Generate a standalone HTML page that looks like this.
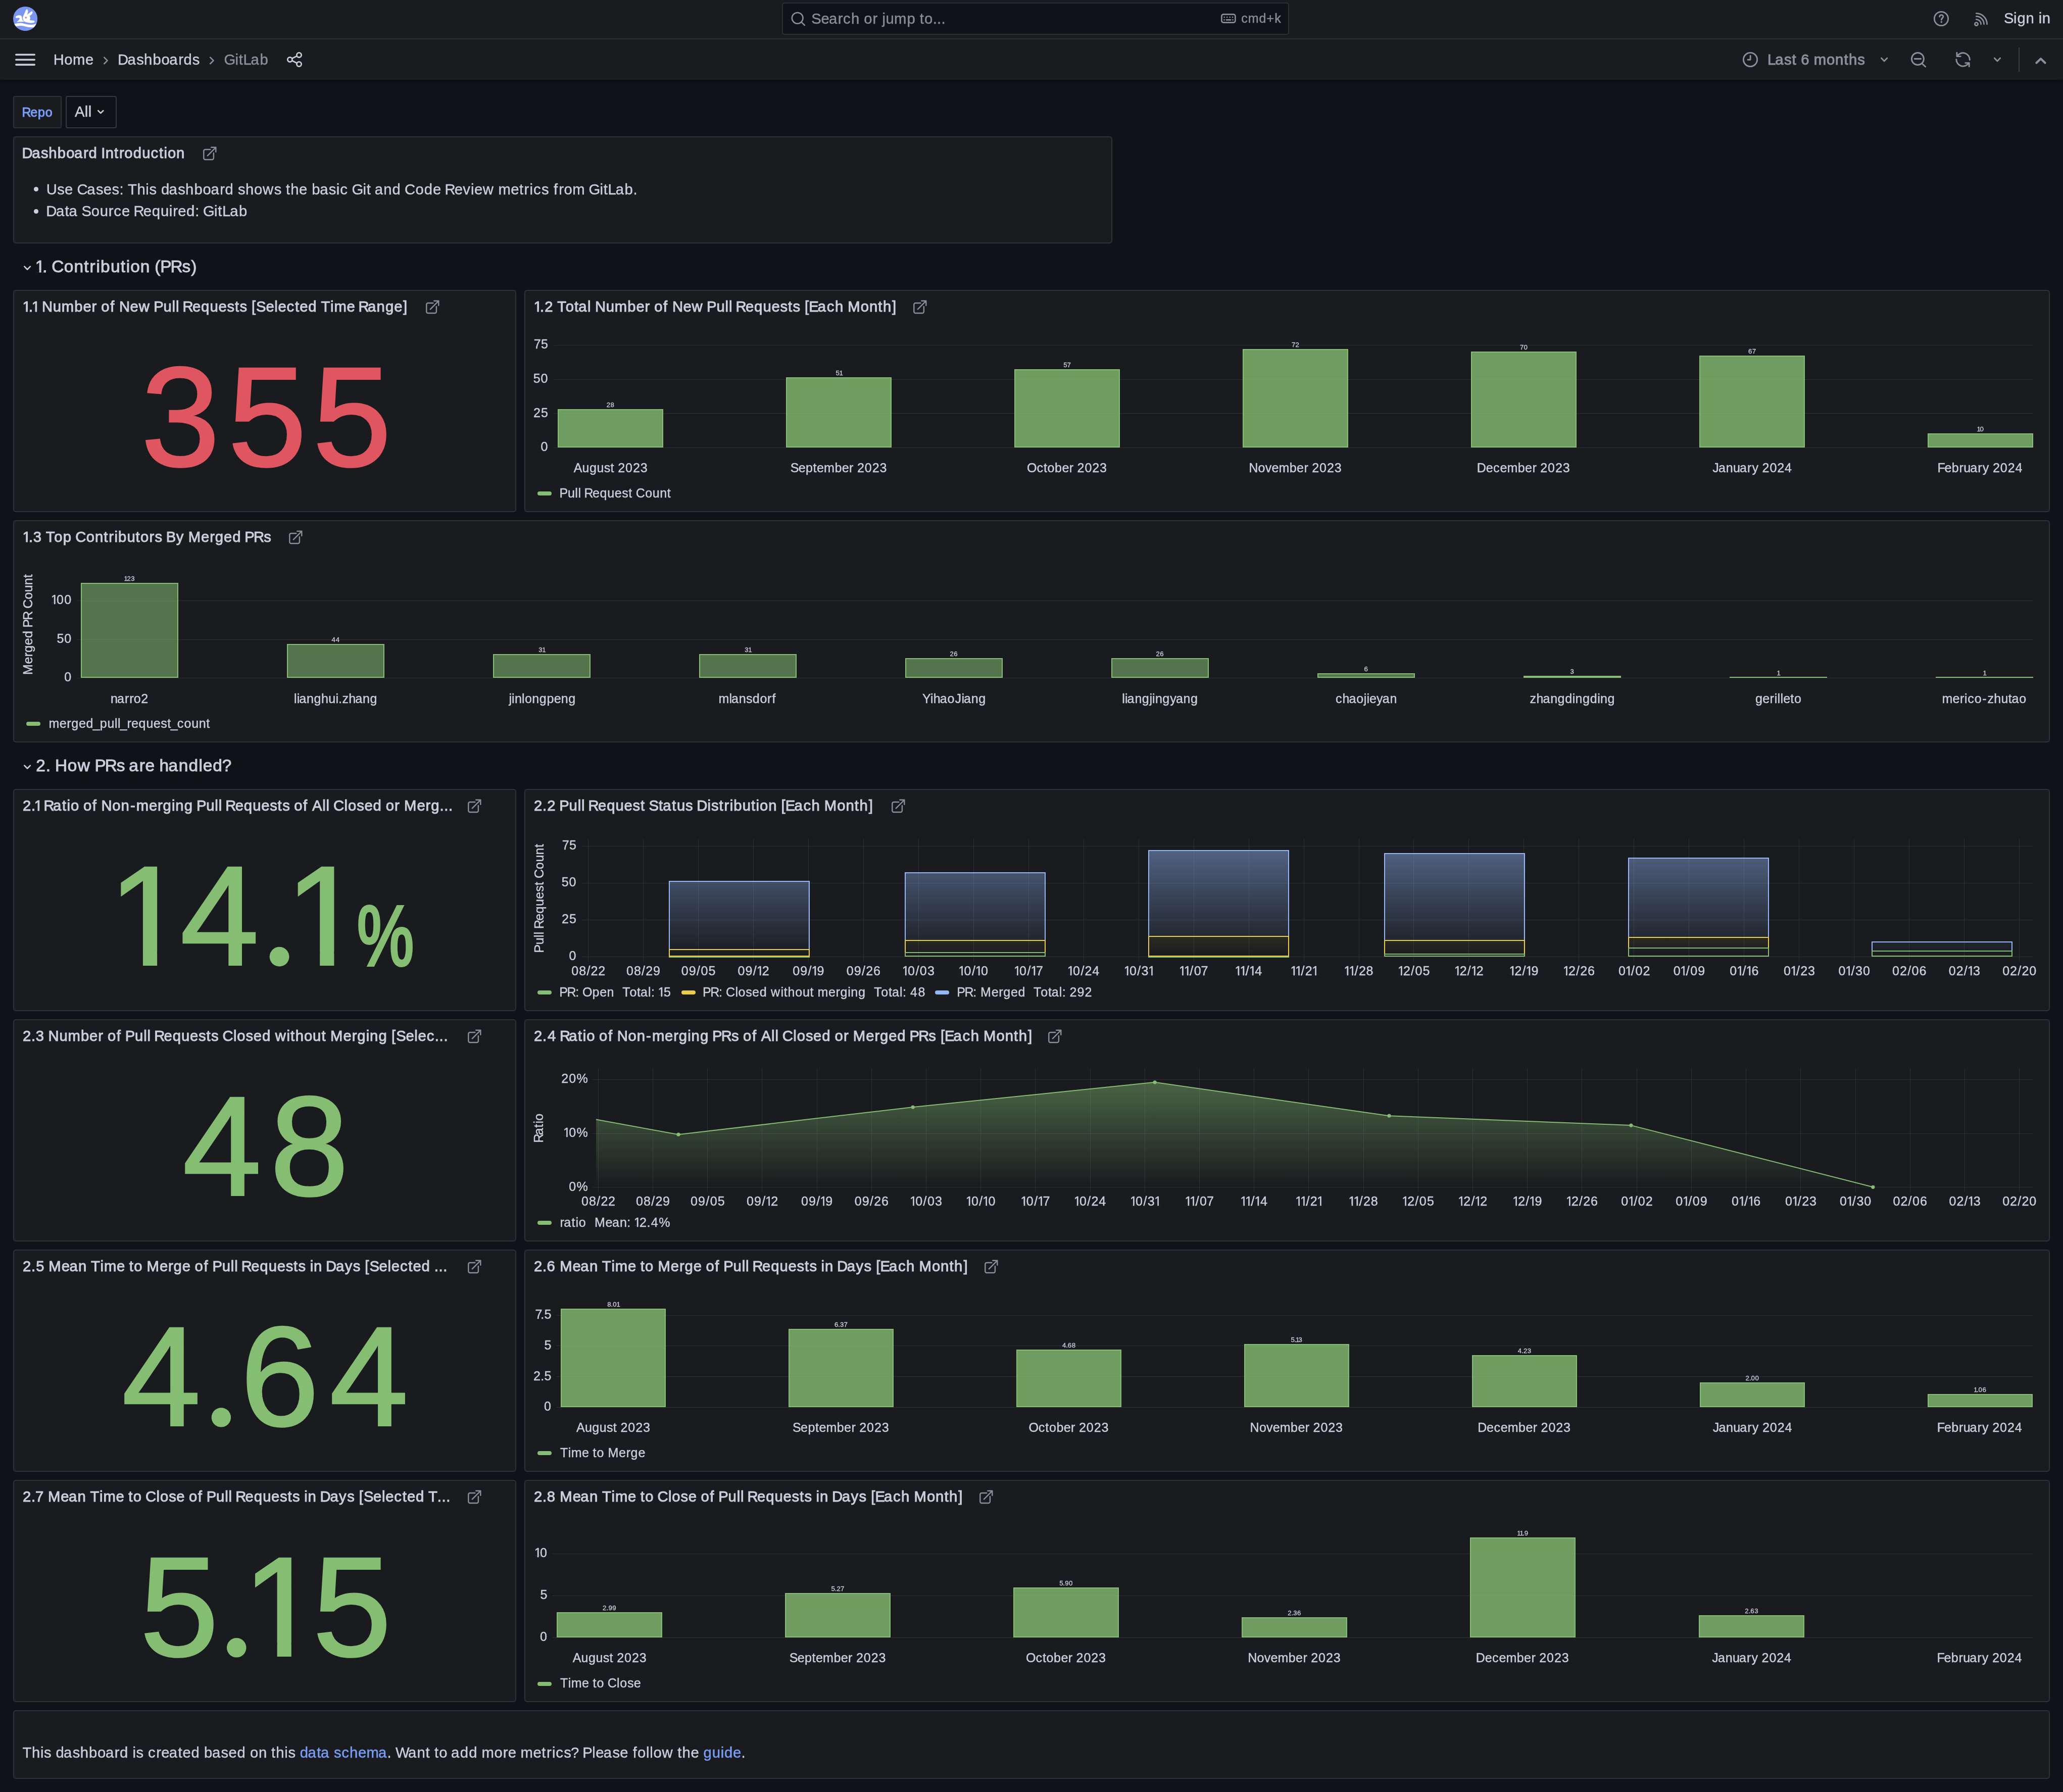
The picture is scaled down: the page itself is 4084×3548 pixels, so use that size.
<!DOCTYPE html>
<html lang="en"><head><meta charset="utf-8"><title>GitLab - Dashboards - Grafana</title>
<style>
html,body{margin:0;padding:0;}
body{width:4084px;height:3548px;background:#111217;overflow:hidden;position:relative;font-family:"Liberation Sans",Arial,sans-serif;}
#root{position:absolute;left:0;top:0;width:4084px;height:3548px;overflow:hidden;will-change:transform;}
#root div,#root span,#root svg{position:absolute;}
#root span{white-space:pre;}
#root svg text{font-family:"Liberation Sans",Arial,sans-serif;white-space:pre;}
#root a{color:#799ef8;text-decoration:none;}
</style></head>
<body><div id="root">
<div style="left:0px;top:0px;width:4084px;height:158px;background:#191b1f;box-shadow:0 0 10px 2px rgba(0,0,0,0.55);"></div>
<div style="left:0px;top:76px;width:4084px;height:2px;background:#2e3035;"></div>
<svg style="left:26px;top:13px;" width="48.2" height="48.2" viewBox="-0.1 -0.1 48.2 48.2"><defs><clipPath id="lc"><circle cx="24" cy="24" r="24.1"/></clipPath></defs><circle cx="24" cy="24" r="24.1" fill="#7b96f0"/><g clip-path="url(#lc)" fill="#fff"><path d="M19.3 24.5 C18.6 21 20 18.5 21.5 15.5 L25.2 6.6 C26 5 28 4.9 28.8 6.6 C30 9 29.5 12.5 27 16.3 L35.6 9.8 C37.2 8.6 38.8 10 38.4 11.8 C37.8 14.5 35.5 16.6 32.3 18.3 C34 20.5 34.6 23.5 32.8 27 C36 27.6 39.5 27.6 41.6 27.8 C43 29 42.8 31 41 31.6 C36 33 30 32.3 24 30.4 C21 29.2 19.8 27 19.3 24.5 Z"/><path d="M4.6 20.6 C5.5 18 9.5 16.6 13.5 17.2 C16.5 17.7 17.6 20 17.6 23.5 C17.8 26.5 19.5 28.5 22 30 C17 30 12 30 7 30.8 L12.8 24.6 C13.6 23 11.5 21.8 8.8 22.4 C6.5 23 5 22.4 4.6 20.6 Z"/><path d="M-1 35.5 C6 33 13 32 18 32.8 C24 33.8 30 36.2 36 36 C40 35.8 44 34.6 49 33 L49 39 C45 40.5 40 41.4 35 41.2 C28 41 22 38 15.5 37.8 C11 37.7 6 38.8 -1 41 Z"/></g><circle cx="25.1" cy="21.7" r="1.9" fill="#ee7f86"/></svg>
<div style="left:1548px;top:5px;width:1004px;height:63.5px;background:#111217;border:2px solid #2d2e34;border-radius:5px;box-sizing:border-box;"></div>
<svg style="left:1560px;top:18px;" width="40" height="40" viewBox="0 0 40 40"><g fill="none" stroke="#8d8e99" stroke-width="2.5" stroke-linecap="round"><circle cx="18.7" cy="17.8" r="10.9"/><path d="M26.6 25.9 L32.9 32"/></g></svg>
<svg style="left:2417.1px;top:27.4px;" width="29.8" height="19" viewBox="0 0 29.8 19"><g fill="none" stroke="#8d8e99" stroke-width="2.6"><rect x="1.4" y="1.4" width="27" height="16.2" rx="3.6"/></g><g fill="#8d8e99"><circle cx="6.7" cy="7.1" r="1.35"/><circle cx="12.2" cy="7.1" r="1.35"/><circle cx="17.7" cy="7.1" r="1.35"/><circle cx="23.2" cy="7.1" r="1.35"/><circle cx="6.4" cy="12.3" r="1.35"/><circle cx="23.6" cy="12.3" r="1.35"/><rect x="9.6" y="10.95" width="10.8" height="2.7" rx="1.35"/></g></svg>
<svg style="left:3823px;top:17px;" width="40" height="40" viewBox="0 0 40 40"><g fill="none" stroke="#8d8e99" stroke-width="2.8" stroke-linecap="round"><circle cx="20" cy="20" r="13.7"/><path d="M16.6 16.2 C16.8 13.4 18.6 12.6 20.3 12.6 C22.4 12.6 23.9 14 23.9 15.8 C23.9 18.6 20.3 18.8 20.3 22.4"/></g><circle cx="20.3" cy="26.6" r="1.8" fill="#8d8e99"/></svg>
<svg style="left:3903px;top:20px;" width="40" height="40" viewBox="0 0 40 40"><g fill="none" stroke="#8d8e99" stroke-width="2.7" stroke-linecap="round"><circle cx="9.5" cy="27.6" r="3.1"/><path d="M9.3 18.3 A9.6 9.6 0 0 1 18.6 27.8"/><path d="M9.3 12.4 A15.4 15.4 0 0 1 24.6 27.8"/><path d="M9.3 6.4 A21.4 21.4 0 0 1 30.6 27.8"/></g></svg>
<svg style="left:28px;top:104px;" width="44" height="28" viewBox="0 0 44 28"><g stroke="#ccccdb" stroke-width="3.6" stroke-linecap="round"><path d="M3.8 4.3H40.2M3.8 14.2H40.2M3.8 24.1H40.2"/></g></svg>
<svg style="left:200px;top:108px;" width="20" height="24" viewBox="0 0 20 24"><path d="M6.2 5.6 L12.6 11.9 L6.2 18.2" fill="none" stroke="#8d8e99" stroke-width="2.6" stroke-linecap="round" stroke-linejoin="round"/></svg>
<svg style="left:410px;top:108px;" width="20" height="24" viewBox="0 0 20 24"><path d="M6.2 5.6 L12.6 11.9 L6.2 18.2" fill="none" stroke="#8d8e99" stroke-width="2.6" stroke-linecap="round" stroke-linejoin="round"/></svg>
<svg style="left:564px;top:100px;" width="40" height="36" viewBox="0 0 40 36"><g fill="none" stroke="#ccccdb" stroke-width="2.8"><circle cx="28" cy="8.9" r="4.6"/><circle cx="9.9" cy="17.9" r="4.6"/><circle cx="28" cy="27" r="4.6"/><path d="M14 15.8 L23.9 10.9 M14 20 L23.9 25"/></g></svg>
<svg style="left:3445px;top:98px;" width="40" height="40" viewBox="0 0 40 40"><g fill="none" stroke="#8d8e99" stroke-width="2.9" stroke-linecap="round" stroke-linejoin="round"><circle cx="20" cy="20" r="13.6"/><path d="M20.1 12.4 V20.2 H15"/></g></svg>
<svg style="left:3720px;top:108px;" width="20" height="20" viewBox="0 0 20 20"><path d="M4.4 7.1 l5.7 5.8 l5.7 -5.8" fill="none" stroke="#8d8e99" stroke-width="2.8" stroke-linecap="round" stroke-linejoin="round"/></svg>
<svg style="left:3778px;top:98px;" width="40" height="40" viewBox="0 0 40 40"><g fill="none" stroke="#8d8e99" stroke-width="2.9" stroke-linecap="round"><circle cx="18.4" cy="18.5" r="12"/><path d="M12.2 18.5 H24.6 M27.4 28.2 L33.6 34"/></g></svg>
<svg style="left:3866px;top:98px;" width="40" height="40" viewBox="0 0 40 40"><g fill="none" stroke="#8d8e99" stroke-width="2.9" stroke-linecap="round" stroke-linejoin="round"><path d="M7.9 6.2 V13.6 H15.3"/><path d="M8.6 13.2 A13.3 13.3 0 0 1 33.3 20.6"/><path d="M32.2 33.8 V26.6 H24.8"/><path d="M31.4 26.8 A13.3 13.3 0 0 1 6.8 19.6"/></g></svg>
<svg style="left:3944px;top:108px;" width="20" height="20" viewBox="0 0 20 20"><path d="M4.3 7.1 l5.7 5.8 l5.7 -5.8" fill="none" stroke="#8d8e99" stroke-width="2.8" stroke-linecap="round" stroke-linejoin="round"/></svg>
<div style="left:3996px;top:94px;width:2px;height:48px;background:#3c3e44;"></div>
<svg style="left:4024px;top:106px;" width="32" height="28" viewBox="0 0 32 28"><path d="M7.4 18.6 L16 10.2 L24.6 18.6" fill="none" stroke="#8d8e99" stroke-width="4.2" stroke-linecap="round" stroke-linejoin="round"/></svg>
<div style="left:26px;top:190px;width:96px;height:64px;background:#191b1f;border:2px solid #2e3035;border-radius:4px;box-sizing:border-box;"></div>
<div style="left:130px;top:190px;width:101px;height:64px;background:#111217;border:2px solid #37373e;border-radius:4px;box-sizing:border-box;"></div>
<svg style="left:189px;top:212px;" width="20" height="20" viewBox="0 0 20 20"><path d="M5.2 7 l5.1 5 l5.1 -5" fill="none" stroke="#ccccdb" stroke-width="2.5" stroke-linecap="round" stroke-linejoin="round"/></svg>
<div style="left:26px;top:270px;width:2176px;height:212px;background:#191b1f;border:2px solid #2e3035;border-radius:5px;box-sizing:border-box;"></div>
<svg style="left:399.7px;top:288px;" width="32" height="32" viewBox="0 0 32 32"><g fill="none" stroke="#8d8e99" stroke-width="2.4" stroke-linecap="round" stroke-linejoin="round"><path d="M16.3 8 H6.3 A3 3 0 0 0 3.3 11 V25 A3 3 0 0 0 6.3 28 H19.9 A3 3 0 0 0 22.9 25 V14.9"/><path d="M10.8 20.3 L27 4.1"/><path d="M18.3 3.8 H27.3 V12.8"/></g></svg>
<div style="left:67.3px;top:370.4px;width:8.6px;height:8.6px;background:#ccccdb;border-radius:4.3px;"></div>
<div style="left:67.3px;top:414px;width:8.6px;height:8.6px;background:#ccccdb;border-radius:4.3px;"></div>
<svg style="left:42px;top:520.9px;" width="24" height="20" viewBox="0 0 24 20"><path d="M6.3 6.6 l5.8 5.9 l5.8 -5.9" fill="none" stroke="#ccccdb" stroke-width="2.7" stroke-linecap="round" stroke-linejoin="round"/></svg>
<div style="left:26px;top:574px;width:996px;height:440px;background:#191b1f;border:2px solid #2e3035;border-radius:5px;box-sizing:border-box;"></div>
<svg style="left:840.6px;top:592px;" width="32" height="32" viewBox="0 0 32 32"><g fill="none" stroke="#8d8e99" stroke-width="2.4" stroke-linecap="round" stroke-linejoin="round"><path d="M16.3 8 H6.3 A3 3 0 0 0 3.3 11 V25 A3 3 0 0 0 6.3 28 H19.9 A3 3 0 0 0 22.9 25 V14.9"/><path d="M10.8 20.3 L27 4.1"/><path d="M18.3 3.8 H27.3 V12.8"/></g></svg>
<svg style="left:26px;top:574px;" width="996" height="440" viewBox="0 0 996 440"><text y="348.3" font-size="280.4" fill="#e05660" stroke="#e05660" stroke-width="3.4" x="253.19 425.05 592.95">355</text></svg>
<div style="left:1038px;top:574px;width:3020px;height:440px;background:#191b1f;border:2px solid #2e3035;border-radius:5px;box-sizing:border-box;"></div>
<svg style="left:1806.1px;top:592px;" width="32" height="32" viewBox="0 0 32 32"><g fill="none" stroke="#8d8e99" stroke-width="2.4" stroke-linecap="round" stroke-linejoin="round"><path d="M16.3 8 H6.3 A3 3 0 0 0 3.3 11 V25 A3 3 0 0 0 6.3 28 H19.9 A3 3 0 0 0 22.9 25 V14.9"/><path d="M10.8 20.3 L27 4.1"/><path d="M18.3 3.8 H27.3 V12.8"/></g></svg>
<div style="left:1097px;top:886px;width:2928px;height:1px;background:#2c2f33;"></div>
<div style="left:1097px;top:818px;width:2928px;height:1px;background:#2c2f33;"></div>
<div style="left:1097px;top:751px;width:2928px;height:1px;background:#2c2f33;"></div>
<div style="left:1097px;top:683px;width:2928px;height:1px;background:#2c2f33;"></div>
<div style="left:1104px;top:810px;width:209px;height:76px;background:rgba(133,189,114,0.8);border:2px solid #85bd72;box-sizing:border-box;"></div>
<div style="left:1556px;top:747px;width:209px;height:139px;background:rgba(133,189,114,0.8);border:2px solid #85bd72;box-sizing:border-box;"></div>
<div style="left:2008px;top:731px;width:209px;height:155px;background:rgba(133,189,114,0.8);border:2px solid #85bd72;box-sizing:border-box;"></div>
<div style="left:2460px;top:691px;width:209px;height:195px;background:rgba(133,189,114,0.8);border:2px solid #85bd72;box-sizing:border-box;"></div>
<div style="left:2912px;top:696px;width:209px;height:190px;background:rgba(133,189,114,0.8);border:2px solid #85bd72;box-sizing:border-box;"></div>
<div style="left:3364px;top:704px;width:209px;height:182px;background:rgba(133,189,114,0.8);border:2px solid #85bd72;box-sizing:border-box;"></div>
<div style="left:3816px;top:858px;width:209px;height:28px;background:rgba(133,189,114,0.8);border:2px solid #85bd72;box-sizing:border-box;"></div>
<div style="left:1064px;top:973.3px;width:28px;height:8px;background:#85bd72;border-radius:4px;"></div>
<div style="left:26px;top:1030px;width:4032px;height:440px;background:#191b1f;border:2px solid #2e3035;border-radius:5px;box-sizing:border-box;"></div>
<svg style="left:569.5px;top:1048px;" width="32" height="32" viewBox="0 0 32 32"><g fill="none" stroke="#8d8e99" stroke-width="2.4" stroke-linecap="round" stroke-linejoin="round"><path d="M16.3 8 H6.3 A3 3 0 0 0 3.3 11 V25 A3 3 0 0 0 6.3 28 H19.9 A3 3 0 0 0 22.9 25 V14.9"/><path d="M10.8 20.3 L27 4.1"/><path d="M18.3 3.8 H27.3 V12.8"/></g></svg>
<div style="left:152.7px;top:1342px;width:3872.3px;height:1px;background:#2c2f33;"></div>
<div style="left:152.7px;top:1266px;width:3872.3px;height:1px;background:#2c2f33;"></div>
<div style="left:152.7px;top:1189px;width:3872.3px;height:1px;background:#2c2f33;"></div>
<div style="left:160px;top:1154px;width:192.6px;height:188px;background:rgba(133,189,114,0.55);border:2px solid #85bd72;box-sizing:border-box;"></div>
<div style="left:568px;top:1275px;width:192.6px;height:67px;background:rgba(133,189,114,0.55);border:2px solid #85bd72;box-sizing:border-box;"></div>
<div style="left:976px;top:1295px;width:192.6px;height:47px;background:rgba(133,189,114,0.55);border:2px solid #85bd72;box-sizing:border-box;"></div>
<div style="left:1384px;top:1295px;width:192.6px;height:47px;background:rgba(133,189,114,0.55);border:2px solid #85bd72;box-sizing:border-box;"></div>
<div style="left:1792px;top:1303px;width:192.6px;height:39px;background:rgba(133,189,114,0.55);border:2px solid #85bd72;box-sizing:border-box;"></div>
<div style="left:2200px;top:1303px;width:192.6px;height:39px;background:rgba(133,189,114,0.55);border:2px solid #85bd72;box-sizing:border-box;"></div>
<div style="left:2608px;top:1333px;width:192.6px;height:9px;background:rgba(133,189,114,0.55);border:2px solid #85bd72;box-sizing:border-box;"></div>
<div style="left:3016px;top:1338px;width:192.6px;height:4px;background:rgba(133,189,114,0.55);border:2px solid #85bd72;box-sizing:border-box;"></div>
<div style="left:3424px;top:1340px;width:192.6px;height:2px;background:#85bd72;"></div>
<div style="left:3832px;top:1340px;width:192.6px;height:2px;background:#85bd72;"></div>
<div style="left:52px;top:1429.3px;width:28px;height:8px;background:#85bd72;border-radius:4px;"></div>
<svg style="left:42px;top:1509px;" width="24" height="20" viewBox="0 0 24 20"><path d="M6.3 6.6 l5.8 5.9 l5.8 -5.9" fill="none" stroke="#ccccdb" stroke-width="2.7" stroke-linecap="round" stroke-linejoin="round"/></svg>
<div style="left:26px;top:1562px;width:996px;height:440px;background:#191b1f;border:2px solid #2e3035;border-radius:5px;box-sizing:border-box;"></div>
<svg style="left:924.2px;top:1580px;" width="32" height="32" viewBox="0 0 32 32"><g fill="none" stroke="#8d8e99" stroke-width="2.4" stroke-linecap="round" stroke-linejoin="round"><path d="M16.3 8 H6.3 A3 3 0 0 0 3.3 11 V25 A3 3 0 0 0 6.3 28 H19.9 A3 3 0 0 0 22.9 25 V14.9"/><path d="M10.8 20.3 L27 4.1"/><path d="M18.3 3.8 H27.3 V12.8"/></g></svg>
<svg style="left:26px;top:1562px;" width="996" height="440" viewBox="0 0 996 440"><text y="348.3" font-size="280.4" fill="#85bd72" stroke="#85bd72" stroke-width="3.4" x="188.11 330.71 488.15 538.41">14.1</text><text transform="translate(685.4 348.51) scale(0.75 1)" x="-6" y="0" font-size="168.2" fill="#85bd72" stroke="#85bd72" stroke-width="6">%</text><rect x="204.77" y="323.15" width="52.15" height="29.85" fill="#191b1f"/><rect x="285.1" y="323.15" width="49.96" height="29.85" fill="#191b1f"/><rect x="509.05" y="312.2" width="36.1" height="40.8" fill="#191b1f"/><circle cx="527.1" cy="332.2" r="19.4" fill="#85bd72"/><rect x="555.07" y="323.15" width="52.15" height="29.85" fill="#191b1f"/><rect x="635.4" y="323.15" width="49.96" height="29.85" fill="#191b1f"/></svg>
<div style="left:1038px;top:1562px;width:3020px;height:440px;background:#191b1f;border:2px solid #2e3035;border-radius:5px;box-sizing:border-box;"></div>
<svg style="left:1763.1px;top:1580px;" width="32" height="32" viewBox="0 0 32 32"><g fill="none" stroke="#8d8e99" stroke-width="2.4" stroke-linecap="round" stroke-linejoin="round"><path d="M16.3 8 H6.3 A3 3 0 0 0 3.3 11 V25 A3 3 0 0 0 6.3 28 H19.9 A3 3 0 0 0 22.9 25 V14.9"/><path d="M10.8 20.3 L27 4.1"/><path d="M18.3 3.8 H27.3 V12.8"/></g></svg>
<div style="left:1152px;top:1894px;width:2873px;height:1px;background:#2c2f33;"></div>
<div style="left:1152px;top:1821px;width:2873px;height:1px;background:#2c2f33;"></div>
<div style="left:1152px;top:1748px;width:2873px;height:1px;background:#2c2f33;"></div>
<div style="left:1152px;top:1675px;width:2873px;height:1px;background:#2c2f33;"></div>
<div style="left:1164px;top:1660.5px;width:1px;height:242px;background:#2c2f33;"></div>
<div style="left:1273px;top:1660.5px;width:1px;height:242px;background:#2c2f33;"></div>
<div style="left:1382px;top:1660.5px;width:1px;height:242px;background:#2c2f33;"></div>
<div style="left:1491px;top:1660.5px;width:1px;height:242px;background:#2c2f33;"></div>
<div style="left:1600px;top:1660.5px;width:1px;height:242px;background:#2c2f33;"></div>
<div style="left:1709px;top:1660.5px;width:1px;height:242px;background:#2c2f33;"></div>
<div style="left:1818px;top:1660.5px;width:1px;height:242px;background:#2c2f33;"></div>
<div style="left:1927px;top:1660.5px;width:1px;height:242px;background:#2c2f33;"></div>
<div style="left:2036px;top:1660.5px;width:1px;height:242px;background:#2c2f33;"></div>
<div style="left:2145px;top:1660.5px;width:1px;height:242px;background:#2c2f33;"></div>
<div style="left:2254px;top:1660.5px;width:1px;height:242px;background:#2c2f33;"></div>
<div style="left:2363px;top:1660.5px;width:1px;height:242px;background:#2c2f33;"></div>
<div style="left:2472px;top:1660.5px;width:1px;height:242px;background:#2c2f33;"></div>
<div style="left:2581px;top:1660.5px;width:1px;height:242px;background:#2c2f33;"></div>
<div style="left:2690px;top:1660.5px;width:1px;height:242px;background:#2c2f33;"></div>
<div style="left:2798px;top:1660.5px;width:1px;height:242px;background:#2c2f33;"></div>
<div style="left:2907px;top:1660.5px;width:1px;height:242px;background:#2c2f33;"></div>
<div style="left:3016px;top:1660.5px;width:1px;height:242px;background:#2c2f33;"></div>
<div style="left:3125px;top:1660.5px;width:1px;height:242px;background:#2c2f33;"></div>
<div style="left:3234px;top:1660.5px;width:1px;height:242px;background:#2c2f33;"></div>
<div style="left:3343px;top:1660.5px;width:1px;height:242px;background:#2c2f33;"></div>
<div style="left:3452px;top:1660.5px;width:1px;height:242px;background:#2c2f33;"></div>
<div style="left:3561px;top:1660.5px;width:1px;height:242px;background:#2c2f33;"></div>
<div style="left:3670px;top:1660.5px;width:1px;height:242px;background:#2c2f33;"></div>
<div style="left:3779px;top:1660.5px;width:1px;height:242px;background:#2c2f33;"></div>
<div style="left:3888px;top:1660.5px;width:1px;height:242px;background:#2c2f33;"></div>
<div style="left:3997px;top:1660.5px;width:1px;height:242px;background:#2c2f33;"></div>
<div style="left:1324px;top:1744px;width:279px;height:135px;background:linear-gradient(180deg, rgba(148,183,249,0.322), rgba(148,183,249,0.033));"></div>
<div style="left:1324px;top:1879px;width:279px;height:15px;background:linear-gradient(180deg, rgba(236,205,71,0.033), rgba(236,205,71,0.001));"></div>
<div style="left:1324px;top:1744px;width:279px;height:150px;border:2px solid #94b7f9;box-sizing:border-box;"></div>
<div style="left:1324px;top:1879px;width:279px;height:15px;border:2px solid #eccd47;box-sizing:border-box;"></div>
<div style="left:1324px;top:1894px;width:279px;height:2px;background:#85bd72;"></div>
<div style="left:1791px;top:1727px;width:279px;height:134px;background:linear-gradient(180deg, rgba(148,183,249,0.358), rgba(148,183,249,0.072));"></div>
<div style="left:1791px;top:1861px;width:279px;height:24px;background:linear-gradient(180deg, rgba(236,205,71,0.072), rgba(236,205,71,0.020));"></div>
<div style="left:1791px;top:1885px;width:279px;height:9px;background:linear-gradient(180deg, rgba(133,189,114,0.020), rgba(133,189,114,0.001));"></div>
<div style="left:1791px;top:1727px;width:279px;height:167px;border:2px solid #94b7f9;box-sizing:border-box;"></div>
<div style="left:1791px;top:1861px;width:279px;height:33px;border:2px solid #eccd47;box-sizing:border-box;"></div>
<div style="left:1791px;top:1885px;width:279px;height:9px;border:2px solid #85bd72;box-sizing:border-box;"></div>
<div style="left:2273px;top:1683px;width:279px;height:170px;background:linear-gradient(180deg, rgba(148,183,249,0.452), rgba(148,183,249,0.089));"></div>
<div style="left:2273px;top:1853px;width:279px;height:41px;background:linear-gradient(180deg, rgba(236,205,71,0.089), rgba(236,205,71,0.001));"></div>
<div style="left:2273px;top:1683px;width:279px;height:211px;border:2px solid #94b7f9;box-sizing:border-box;"></div>
<div style="left:2273px;top:1853px;width:279px;height:41px;border:2px solid #eccd47;box-sizing:border-box;"></div>
<div style="left:2273px;top:1894px;width:279px;height:2px;background:#85bd72;"></div>
<div style="left:2740px;top:1689px;width:279px;height:172px;background:linear-gradient(180deg, rgba(148,183,249,0.439), rgba(148,183,249,0.072));"></div>
<div style="left:2740px;top:1861px;width:279px;height:27px;background:linear-gradient(180deg, rgba(236,205,71,0.072), rgba(236,205,71,0.014));"></div>
<div style="left:2740px;top:1888px;width:279px;height:6px;background:linear-gradient(180deg, rgba(133,189,114,0.014), rgba(133,189,114,0.001));"></div>
<div style="left:2740px;top:1689px;width:279px;height:205px;border:2px solid #94b7f9;box-sizing:border-box;"></div>
<div style="left:2740px;top:1861px;width:279px;height:33px;border:2px solid #eccd47;box-sizing:border-box;"></div>
<div style="left:2740px;top:1888px;width:279px;height:6px;border:2px solid #85bd72;box-sizing:border-box;"></div>
<div style="left:3223px;top:1698px;width:279px;height:157px;background:linear-gradient(180deg, rgba(148,183,249,0.420), rgba(148,183,249,0.084));"></div>
<div style="left:3223px;top:1855px;width:279px;height:21px;background:linear-gradient(180deg, rgba(236,205,71,0.084), rgba(236,205,71,0.040));"></div>
<div style="left:3223px;top:1876px;width:279px;height:18px;background:linear-gradient(180deg, rgba(133,189,114,0.040), rgba(133,189,114,0.001));"></div>
<div style="left:3223px;top:1698px;width:279px;height:196px;border:2px solid #94b7f9;box-sizing:border-box;"></div>
<div style="left:3223px;top:1855px;width:279px;height:39px;border:2px solid #eccd47;box-sizing:border-box;"></div>
<div style="left:3223px;top:1876px;width:279px;height:18px;border:2px solid #85bd72;box-sizing:border-box;"></div>
<div style="left:3705px;top:1864px;width:279px;height:18px;background:linear-gradient(180deg, rgba(148,183,249,0.065), rgba(148,183,249,0.027));"></div>
<div style="left:3705px;top:1882px;width:279px;height:12px;background:linear-gradient(180deg, rgba(133,189,114,0.027), rgba(133,189,114,0.001));"></div>
<div style="left:3705px;top:1864px;width:279px;height:30px;border:2px solid #94b7f9;box-sizing:border-box;"></div>
<div style="left:3705px;top:1882px;width:279px;height:12px;border:2px solid #85bd72;box-sizing:border-box;"></div>
<div style="left:1063.7px;top:1961.3px;width:28px;height:8px;background:#85bd72;border-radius:4px;"></div>
<div style="left:1349.4px;top:1961.3px;width:28px;height:8px;background:#eccd47;border-radius:4px;"></div>
<div style="left:1851.4px;top:1961.3px;width:28px;height:8px;background:#94b7f9;border-radius:4px;"></div>
<div style="left:26px;top:2018px;width:996px;height:440px;background:#191b1f;border:2px solid #2e3035;border-radius:5px;box-sizing:border-box;"></div>
<svg style="left:924.2px;top:2036px;" width="32" height="32" viewBox="0 0 32 32"><g fill="none" stroke="#8d8e99" stroke-width="2.4" stroke-linecap="round" stroke-linejoin="round"><path d="M16.3 8 H6.3 A3 3 0 0 0 3.3 11 V25 A3 3 0 0 0 6.3 28 H19.9 A3 3 0 0 0 22.9 25 V14.9"/><path d="M10.8 20.3 L27 4.1"/><path d="M18.3 3.8 H27.3 V12.8"/></g></svg>
<svg style="left:26px;top:2018px;" width="996" height="440" viewBox="0 0 996 440"><text y="348.3" font-size="280.4" fill="#85bd72" stroke="#85bd72" stroke-width="3.4" x="335.56 508.42">48</text></svg>
<div style="left:1038px;top:2018px;width:3020px;height:440px;background:#191b1f;border:2px solid #2e3035;border-radius:5px;box-sizing:border-box;"></div>
<svg style="left:2073.2px;top:2036px;" width="32" height="32" viewBox="0 0 32 32"><g fill="none" stroke="#8d8e99" stroke-width="2.4" stroke-linecap="round" stroke-linejoin="round"><path d="M16.3 8 H6.3 A3 3 0 0 0 3.3 11 V25 A3 3 0 0 0 6.3 28 H19.9 A3 3 0 0 0 22.9 25 V14.9"/><path d="M10.8 20.3 L27 4.1"/><path d="M18.3 3.8 H27.3 V12.8"/></g></svg>
<div style="left:1172.6px;top:2350px;width:2852.4px;height:1px;background:#2c2f33;"></div>
<div style="left:1172.6px;top:2244px;width:2852.4px;height:1px;background:#2c2f33;"></div>
<div style="left:1172.6px;top:2137px;width:2852.4px;height:1px;background:#2c2f33;"></div>
<div style="left:1184px;top:2116.4px;width:1px;height:242.5px;background:#2c2f33;"></div>
<div style="left:1292px;top:2116.4px;width:1px;height:242.5px;background:#2c2f33;"></div>
<div style="left:1400px;top:2116.4px;width:1px;height:242.5px;background:#2c2f33;"></div>
<div style="left:1508px;top:2116.4px;width:1px;height:242.5px;background:#2c2f33;"></div>
<div style="left:1617px;top:2116.4px;width:1px;height:242.5px;background:#2c2f33;"></div>
<div style="left:1725px;top:2116.4px;width:1px;height:242.5px;background:#2c2f33;"></div>
<div style="left:1833px;top:2116.4px;width:1px;height:242.5px;background:#2c2f33;"></div>
<div style="left:1941px;top:2116.4px;width:1px;height:242.5px;background:#2c2f33;"></div>
<div style="left:2049px;top:2116.4px;width:1px;height:242.5px;background:#2c2f33;"></div>
<div style="left:2158px;top:2116.4px;width:1px;height:242.5px;background:#2c2f33;"></div>
<div style="left:2266px;top:2116.4px;width:1px;height:242.5px;background:#2c2f33;"></div>
<div style="left:2374px;top:2116.4px;width:1px;height:242.5px;background:#2c2f33;"></div>
<div style="left:2482px;top:2116.4px;width:1px;height:242.5px;background:#2c2f33;"></div>
<div style="left:2590px;top:2116.4px;width:1px;height:242.5px;background:#2c2f33;"></div>
<div style="left:2699px;top:2116.4px;width:1px;height:242.5px;background:#2c2f33;"></div>
<div style="left:2807px;top:2116.4px;width:1px;height:242.5px;background:#2c2f33;"></div>
<div style="left:2915px;top:2116.4px;width:1px;height:242.5px;background:#2c2f33;"></div>
<div style="left:3023px;top:2116.4px;width:1px;height:242.5px;background:#2c2f33;"></div>
<div style="left:3131px;top:2116.4px;width:1px;height:242.5px;background:#2c2f33;"></div>
<div style="left:3240px;top:2116.4px;width:1px;height:242.5px;background:#2c2f33;"></div>
<div style="left:3348px;top:2116.4px;width:1px;height:242.5px;background:#2c2f33;"></div>
<div style="left:3456px;top:2116.4px;width:1px;height:242.5px;background:#2c2f33;"></div>
<div style="left:3564px;top:2116.4px;width:1px;height:242.5px;background:#2c2f33;"></div>
<div style="left:3673px;top:2116.4px;width:1px;height:242.5px;background:#2c2f33;"></div>
<div style="left:3781px;top:2116.4px;width:1px;height:242.5px;background:#2c2f33;"></div>
<div style="left:3889px;top:2116.4px;width:1px;height:242.5px;background:#2c2f33;"></div>
<div style="left:3997px;top:2116.4px;width:1px;height:242.5px;background:#2c2f33;"></div>
<svg style="left:1170px;top:2100px;" width="2860" height="270" viewBox="0 0 2860 270"><defs><linearGradient id="g24" gradientUnits="userSpaceOnUse" x1="0" y1="16.4" x2="0" y2="250.9"><stop offset="0" stop-color="#85bd72" stop-opacity="0.5"/><stop offset="1" stop-color="#85bd72" stop-opacity="0"/></linearGradient></defs><path d="M10 116.5 L173 146.2 L637.2 92.1 L1116.1 42.8 L1580 109.2 L2058.9 128.1 L2537.8 250.3 L2537.8 250.9 L10 250.9 Z" fill="url(#g24)"/><path d="M10 116.5 L173 146.2 L637.2 92.1 L1116.1 42.8 L1580 109.2 L2058.9 128.1 L2537.8 250.3" fill="none" stroke="#85bd72" stroke-width="2" stroke-linejoin="round"/><circle cx="173" cy="146.2" r="3.6" fill="#85bd72"/><circle cx="637.2" cy="92.1" r="3.6" fill="#85bd72"/><circle cx="1116.1" cy="42.8" r="3.6" fill="#85bd72"/><circle cx="1580" cy="109.2" r="3.6" fill="#85bd72"/><circle cx="2058.9" cy="128.1" r="3.6" fill="#85bd72"/><circle cx="2537.8" cy="250.3" r="3.6" fill="#85bd72"/></svg>
<div style="left:1063.7px;top:2417.3px;width:28px;height:8px;background:#85bd72;border-radius:4px;"></div>
<div style="left:26px;top:2474px;width:996px;height:440px;background:#191b1f;border:2px solid #2e3035;border-radius:5px;box-sizing:border-box;"></div>
<svg style="left:924.2px;top:2492px;" width="32" height="32" viewBox="0 0 32 32"><g fill="none" stroke="#8d8e99" stroke-width="2.4" stroke-linecap="round" stroke-linejoin="round"><path d="M16.3 8 H6.3 A3 3 0 0 0 3.3 11 V25 A3 3 0 0 0 6.3 28 H19.9 A3 3 0 0 0 22.9 25 V14.9"/><path d="M10.8 20.3 L27 4.1"/><path d="M18.3 3.8 H27.3 V12.8"/></g></svg>
<svg style="left:26px;top:2474px;" width="996" height="440" viewBox="0 0 996 440"><text y="348.3" font-size="280.4" fill="#85bd72" stroke="#85bd72" stroke-width="3.4" x="215.46 372.95 449.82 626.46">4.64</text><rect x="393.85" y="312.2" width="36.1" height="40.8" fill="#191b1f"/><circle cx="411.9" cy="332.4" r="19.2" fill="#85bd72"/></svg>
<div style="left:1038px;top:2474px;width:3020px;height:440px;background:#191b1f;border:2px solid #2e3035;border-radius:5px;box-sizing:border-box;"></div>
<svg style="left:1946.9px;top:2492px;" width="32" height="32" viewBox="0 0 32 32"><g fill="none" stroke="#8d8e99" stroke-width="2.4" stroke-linecap="round" stroke-linejoin="round"><path d="M16.3 8 H6.3 A3 3 0 0 0 3.3 11 V25 A3 3 0 0 0 6.3 28 H19.9 A3 3 0 0 0 22.9 25 V14.9"/><path d="M10.8 20.3 L27 4.1"/><path d="M18.3 3.8 H27.3 V12.8"/></g></svg>
<div style="left:1102px;top:2786px;width:2923px;height:1px;background:#2c2f33;"></div>
<div style="left:1102px;top:2725px;width:2923px;height:1px;background:#2c2f33;"></div>
<div style="left:1102px;top:2664px;width:2923px;height:1px;background:#2c2f33;"></div>
<div style="left:1102px;top:2604px;width:2923px;height:1px;background:#2c2f33;"></div>
<div style="left:1110px;top:2591px;width:207.7px;height:195px;background:rgba(133,189,114,0.8);border:2px solid #85bd72;box-sizing:border-box;"></div>
<div style="left:1561px;top:2631px;width:207.7px;height:155px;background:rgba(133,189,114,0.8);border:2px solid #85bd72;box-sizing:border-box;"></div>
<div style="left:2012px;top:2672px;width:207.7px;height:114px;background:rgba(133,189,114,0.8);border:2px solid #85bd72;box-sizing:border-box;"></div>
<div style="left:2463px;top:2661px;width:207.7px;height:125px;background:rgba(133,189,114,0.8);border:2px solid #85bd72;box-sizing:border-box;"></div>
<div style="left:2914px;top:2683px;width:207.7px;height:103px;background:rgba(133,189,114,0.8);border:2px solid #85bd72;box-sizing:border-box;"></div>
<div style="left:3365px;top:2737px;width:207.7px;height:49px;background:rgba(133,189,114,0.8);border:2px solid #85bd72;box-sizing:border-box;"></div>
<div style="left:3816px;top:2760px;width:207.7px;height:26px;background:rgba(133,189,114,0.8);border:2px solid #85bd72;box-sizing:border-box;"></div>
<div style="left:1063.7px;top:2873px;width:28px;height:8px;background:#85bd72;border-radius:4px;"></div>
<div style="left:26px;top:2930px;width:996px;height:440px;background:#191b1f;border:2px solid #2e3035;border-radius:5px;box-sizing:border-box;"></div>
<svg style="left:924.2px;top:2948px;" width="32" height="32" viewBox="0 0 32 32"><g fill="none" stroke="#8d8e99" stroke-width="2.4" stroke-linecap="round" stroke-linejoin="round"><path d="M16.3 8 H6.3 A3 3 0 0 0 3.3 11 V25 A3 3 0 0 0 6.3 28 H19.9 A3 3 0 0 0 22.9 25 V14.9"/><path d="M10.8 20.3 L27 4.1"/><path d="M18.3 3.8 H27.3 V12.8"/></g></svg>
<svg style="left:26px;top:2930px;" width="996" height="440" viewBox="0 0 996 440"><text y="348.3" font-size="280.4" fill="#85bd72" stroke="#85bd72" stroke-width="3.4" x="250.85 403.3 453.81 592.95">5.15</text><rect x="424.2" y="312.2" width="36.1" height="40.8" fill="#191b1f"/><circle cx="442.25" cy="332.35" r="19.25" fill="#85bd72"/><rect x="470.47" y="323.15" width="52.15" height="29.85" fill="#191b1f"/><rect x="550.8" y="323.15" width="49.96" height="29.85" fill="#191b1f"/></svg>
<div style="left:1038px;top:2930px;width:3020px;height:440px;background:#191b1f;border:2px solid #2e3035;border-radius:5px;box-sizing:border-box;"></div>
<svg style="left:1937.1px;top:2948px;" width="32" height="32" viewBox="0 0 32 32"><g fill="none" stroke="#8d8e99" stroke-width="2.4" stroke-linecap="round" stroke-linejoin="round"><path d="M16.3 8 H6.3 A3 3 0 0 0 3.3 11 V25 A3 3 0 0 0 6.3 28 H19.9 A3 3 0 0 0 22.9 25 V14.9"/><path d="M10.8 20.3 L27 4.1"/><path d="M18.3 3.8 H27.3 V12.8"/></g></svg>
<div style="left:1094px;top:3242px;width:2931px;height:1px;background:#2c2f33;"></div>
<div style="left:1094px;top:3159px;width:2931px;height:1px;background:#2c2f33;"></div>
<div style="left:1094px;top:3076px;width:2931px;height:1px;background:#2c2f33;"></div>
<div style="left:1102px;top:3192px;width:209px;height:50px;background:rgba(133,189,114,0.8);border:2px solid #85bd72;box-sizing:border-box;"></div>
<div style="left:1554px;top:3154px;width:209px;height:88px;background:rgba(133,189,114,0.8);border:2px solid #85bd72;box-sizing:border-box;"></div>
<div style="left:2006px;top:3143px;width:209px;height:99px;background:rgba(133,189,114,0.8);border:2px solid #85bd72;box-sizing:border-box;"></div>
<div style="left:2458px;top:3202px;width:209px;height:40px;background:rgba(133,189,114,0.8);border:2px solid #85bd72;box-sizing:border-box;"></div>
<div style="left:2910px;top:3044px;width:209px;height:198px;background:rgba(133,189,114,0.8);border:2px solid #85bd72;box-sizing:border-box;"></div>
<div style="left:3363px;top:3198px;width:209px;height:44px;background:rgba(133,189,114,0.8);border:2px solid #85bd72;box-sizing:border-box;"></div>
<div style="left:1063.7px;top:3329.6px;width:28px;height:8px;background:#85bd72;border-radius:4px;"></div>
<div style="left:26px;top:3386px;width:4032px;height:136px;background:#191b1f;border:2px solid #2e3035;border-radius:5px;box-sizing:border-box;"></div>
<svg id="txt" style="left:0;top:0" width="4084" height="3548" viewBox="0 0 4084 3548">
<text x="1606.3 1625.5 1640.9 1658.7 1669.1 1685.1 1701.3 1710.3 1727.5 1737.3 1746.6 1753.4 1770.1 1795.4 1811.6 1820.7 1829.9 1846.7 1855.1 1863.5" y="47.2" font-size="29.26" fill="#8b8b96" stroke="#8b8b96" stroke-width="0.45">Search or jump to...</text>
<text x="2457.2 2470.8 2492.4 2507.6 2523.3" y="45" font-size="25.08" fill="#8b8b96" stroke="#8b8b96" stroke-width="0.45">cmd+k</text>
<text x="3966.9 3986.1 3993.5 4010.6 4026.9 4035.7 4042.8" y="46.4" font-size="29.26" fill="#ccccdb" stroke="#ccccdb" stroke-width="0.45">Sign in</text>
<text x="105.7 127.2 144.1 168.9" y="128" font-size="29.26" fill="#ccccdb" stroke="#ccccdb" stroke-width="0.45">Home</text>
<text x="232.9 252.6 270.2 285.1 302.4 319.6 335.3 353.2 363.5 380.8" y="128" font-size="29.26" fill="#ccccdb" stroke="#ccccdb" stroke-width="0.45">Dashboards</text>
<text x="443.5 465.5 472.7 481.5 496.6 514.5" y="128" font-size="29.26" fill="#8d8e99" stroke="#8d8e99" stroke-width="0.45">GitLab</text>
<text x="3499 3514.3 3532.1 3547.6 3555.7 3565.3 3581.6 3590.7 3615.9 3633.1 3650.4 3660 3677.3" y="128.3" font-size="29.26" fill="#8d8e99" stroke="#8d8e99" stroke-width="1">Last 6 months</text>
<text x="43.5 60.2 74.9 89.8" y="230.8" font-size="25.08" fill="#799ef8" stroke="#799ef8" stroke-width="1">Repo</text>
<text x="147.9 167.7 174.8" y="231" font-size="29.26" fill="#ccccdb" stroke="#ccccdb" stroke-width="0.45">All</text>
<text x="43.4 63.3 81.1 96.3 113.8 131.2 147.1 165.1 175.6 191.9 200.3 208.7 226 236 246.3 263.7 281.2 298.5 314.9 324.6 331.9 349.1" y="313.3" font-size="29.26" fill="#ccccdb" stroke="#ccccdb" stroke-width="1">Dashboard Introduction</text>
<text x="91.7 113.2 128.1 144.4 152.4 172.2 189.9 204.8 221.6 236.4 244.5 253.1 271.4 288.3 295.5 310.1 318.9 334.6 352.2 367.1 384.4 401.6 417.4 435.2 445.5 461.8 471 485.9 502.9 520.1 542.7 557.3 566 575.3 592.1 608.4 617.3 633.2 650.8 665.8 673.2 687.8 696.6 718.6 725.7 733.9 741.7 759.2 776.4 792.6 801.1 822.6 839.8 857 873.2 880.4 899.7 916.2 931.9 938.9 955.8 976.9 986.4 1011.2 1028 1037.6 1048.6 1056 1072.1 1086.7 1095.9 1106.2 1116.4 1133.3 1157.7 1165.6 1187.6 1194.8 1203.6 1218.7 1236.6 1253.5" y="384.8" font-size="29.26" fill="#ccccdb" stroke="#ccccdb" stroke-width="0.45">Use Cases: This dashboard shows the basic Git and Code Review metrics from GitLab.</text>
<text x="91.3 111 128.6 136.6 152.9 161.4 180.7 197.7 214.8 225.2 241.1 257.4 264.6 283.8 300.7 318 334.8 342.2 352.2 369.1 386.2 394.3 402.1 424.1 431.3 440.1 455.2 473.1" y="428.4" font-size="29.26" fill="#ccccdb" stroke="#ccccdb" stroke-width="0.45">Data Source Required: GitLab</text>
<text x="69.8 84.2 93.5 102.2 126.8 146.4 166.2 177.5 190.4 199.1 218.9 238.7 249.8 258.2 277.8 296.4 306.3 317.2 337.5 360.5 378.2" y="538.5" font-size="33.44" fill="#ccccdb" stroke="#ccccdb" stroke-width="1">1. Contribution (PRs)</text>
<text x="44.4 57.1 62.7 79 83 104.7 121.8 147.3 164.5 181.6 191.4 200.3 218.2 226.3 235.9 257.5 274.7 295.8 304.2 323.5 340.6 347.9 354.4 361.5 381 398.1 415.5 432.5 449.5 464.9 474.4 489.1 498 507.1 526.4 543.2 550.5 567.6 584 593.2 610.3 626.6 635.4 654.1 661.4 686.4 702.7 709.5 727.9 745.6 763 780.2 797.9" y="617.3" font-size="29.26" fill="#ccccdb" stroke="#ccccdb" stroke-width="1">1.1 Number of New Pull Requests [Selected Time Range]</text>
<text x="1056.4 1069.1 1078.3 1094.5 1103.2 1119.7 1137.1 1145.3 1163.1 1169.6 1177.9 1199.7 1216.8 1242.3 1259.5 1276.6 1286.3 1295.3 1313.1 1321.3 1330.9 1352.5 1369.6 1390.8 1399.1 1418.5 1435.6 1442.9 1449.4 1456.5 1476 1493.1 1510.5 1527.5 1544.5 1559.9 1569.4 1584.1 1593 1601.2 1618.7 1636.7 1652.9 1669.2 1678.2 1703.7 1720.9 1738.2 1747.9 1766.1" y="617.3" font-size="29.26" fill="#ccccdb" stroke="#ccccdb" stroke-width="1">1.2 Total Number of New Pull Requests [Each Month]</text>
<text x="1070.4" y="893.2" font-size="25.08" fill="#ccccdb" stroke="#ccccdb" stroke-width="0.45">0</text>
<text x="1056.1 1070.9" y="825.6" font-size="25.08" fill="#ccccdb" stroke="#ccccdb" stroke-width="0.45">25</text>
<text x="1055.8 1070.4" y="757.9" font-size="25.08" fill="#ccccdb" stroke="#ccccdb" stroke-width="0.45">50</text>
<text x="1056.8 1070.9" y="690.2" font-size="25.08" fill="#ccccdb" stroke="#ccccdb" stroke-width="0.45">75</text>
<text x="1200.8 1208.6" y="805.6" font-size="13.27" fill="#ccccdb" stroke="#ccccdb" stroke-width="0.3">28</text>
<text x="1135.7 1152.5 1166.9 1181.4 1195.7 1208.4 1215.3 1223.2 1238 1252.9 1267.7" y="935.2" font-size="25.08" fill="#ccccdb" stroke="#ccccdb" stroke-width="0.45">August 2023</text>
<text x="1654.4 1661.4" y="742.6" font-size="13.27" fill="#ccccdb" stroke="#ccccdb" stroke-width="0.3">51</text>
<text x="1564.7 1580.8 1595.1 1609.6 1617.1 1631.1 1652.4 1666.8 1681.1 1689.5 1696.9 1711.7 1726.7 1741.5" y="935.2" font-size="25.08" fill="#ccccdb" stroke="#ccccdb" stroke-width="0.45">September 2023</text>
<text x="2105.2 2112.5" y="726.6" font-size="13.27" fill="#ccccdb" stroke="#ccccdb" stroke-width="0.3">57</text>
<text x="2033 2052.4 2065.9 2073.5 2088.1 2102.4 2116.7 2125.1 2132.5 2147.4 2162.3 2177.1" y="935.2" font-size="25.08" fill="#ccccdb" stroke="#ccccdb" stroke-width="0.45">October 2023</text>
<text x="2557.1 2564.6" y="686.6" font-size="13.27" fill="#ccccdb" stroke="#ccccdb" stroke-width="0.3">72</text>
<text x="2472.3 2490.6 2504.8 2517.4 2531.4 2552.7 2567.1 2581.4 2589.7 2597.2 2612 2627 2641.7" y="935.2" font-size="25.08" fill="#ccccdb" stroke="#ccccdb" stroke-width="0.45">November 2023</text>
<text x="3009 3016.4" y="691.6" font-size="13.27" fill="#ccccdb" stroke="#ccccdb" stroke-width="0.3">70</text>
<text x="2923.8 2941.7 2956 2969.4 2983.4 3004.7 3019.1 3033.4 3041.7 3049.2 3064 3079 3093.7" y="935.2" font-size="25.08" fill="#ccccdb" stroke="#ccccdb" stroke-width="0.45">December 2023</text>
<text x="3461.1 3468.7" y="699.6" font-size="13.27" fill="#ccccdb" stroke="#ccccdb" stroke-width="0.3">67</text>
<text x="3390.3 3402 3416.8 3431 3443.9 3458.9 3468.4 3480.9 3488.6 3503.4 3518.3 3533.1" y="935.2" font-size="25.08" fill="#ccccdb" stroke="#ccccdb" stroke-width="0.45">January 2024</text>
<text x="3913.5 3919.5" y="853.6" font-size="13.27" fill="#ccccdb" stroke="#ccccdb" stroke-width="0.3">10</text>
<text x="3835.4 3849.5 3863.8 3878.5 3887.3 3900.2 3915.2 3924.7 3937.3 3944.9 3959.7 3974.7 3989.4" y="935.2" font-size="25.08" fill="#ccccdb" stroke="#ccccdb" stroke-width="0.45">February 2024</text>
<text x="1107.4 1123.9 1138.3 1144.4 1150 1156.4 1173 1187.5 1202.3 1216.7 1231.2 1244.2 1251.1 1258.7 1277.2 1291.8 1306.2 1320.8" y="984.6" font-size="25.08" fill="#ccccdb" stroke="#ccccdb" stroke-width="0.45">Pull Request Count</text>
<text x="44.4 57.1 65.8 82 90.8 107.3 124.8 141 149.2 170.8 187.9 205.2 215.2 226.4 234 251.4 268.6 278.1 295.5 306.5 321.1 328.7 348.7 363.3 372.7 398.1 415.2 425.8 443.1 460.2 476.5 484.3 502.1 522.2" y="1073.3" font-size="29.26" fill="#ccccdb" stroke="#ccccdb" stroke-width="1">1.3 Top Contributors By Merged PRs</text>
<text x="-45.5 -24.1 -9.8 -1.2 13.2 27.5 41.4 47.9 62.8 80.9 85.7 103.9 118.2 132.3 146.6" y="1244.5" font-size="25.08" fill="#ccccdb" stroke="#ccccdb" stroke-width="0.45" transform="rotate(-90 55 1235.5)">Merged PR Count</text>
<text x="127.2" y="1349.3" font-size="25.08" fill="#ccccdb" stroke="#ccccdb" stroke-width="0.45">0</text>
<text x="112.6 127.2" y="1272.8" font-size="25.08" fill="#ccccdb" stroke="#ccccdb" stroke-width="0.45">50</text>
<text x="100.8 112 127.2" y="1196.3" font-size="25.08" fill="#ccccdb" stroke="#ccccdb" stroke-width="0.45">100</text>
<text x="245.5 251.4 259.2" y="1149.6" font-size="13.27" fill="#ccccdb" stroke="#ccccdb" stroke-width="0.3">123</text>
<text x="219 231.9 246.9 256.3 264.8 279.3" y="1391.8" font-size="25.08" fill="#ccccdb" stroke="#ccccdb" stroke-width="0.45">narro2</text>
<text x="656.6 664.8" y="1270.6" font-size="13.27" fill="#ccccdb" stroke="#ccccdb" stroke-width="0.3">44</text>
<text x="581.9 587.8 592.3 607 621.5 635.9 650.2 664.4 670 677.4 690.3 703.2 718 732.4" y="1391.8" font-size="25.08" fill="#ccccdb" stroke="#ccccdb" stroke-width="0.45">lianghui.zhang</text>
<text x="1066.3 1073.3" y="1290.6" font-size="13.27" fill="#ccccdb" stroke="#ccccdb" stroke-width="0.3">31</text>
<text x="1007.5 1013.1 1018.9 1033.1 1039 1053.2 1067.7 1082.5 1096.8 1110.8 1125.3" y="1391.8" font-size="25.08" fill="#ccccdb" stroke="#ccccdb" stroke-width="0.45">jinlongpeng</text>
<text x="1474.3 1481.3" y="1290.6" font-size="13.27" fill="#ccccdb" stroke="#ccccdb" stroke-width="0.3">31</text>
<text x="1422.4 1443.4 1448 1462.7 1477 1489.8 1504.4 1518.9 1528.6" y="1391.8" font-size="25.08" fill="#ccccdb" stroke="#ccccdb" stroke-width="0.45">mlansdorf</text>
<text x="1880.6 1888.3" y="1298.6" font-size="13.27" fill="#ccccdb" stroke="#ccccdb" stroke-width="0.3">26</text>
<text x="1826 1842 1847.7 1860.7 1875.5 1890.6 1903.6 1908.1 1922.8 1937.2" y="1391.8" font-size="25.08" fill="#ccccdb" stroke="#ccccdb" stroke-width="0.45">YihaoJiang</text>
<text x="2288.6 2296.3" y="1298.6" font-size="13.27" fill="#ccccdb" stroke="#ccccdb" stroke-width="0.3">26</text>
<text x="2221.3 2227.1 2231.6 2246.4 2260.8 2275.6 2281.1 2286.9 2301.3 2316.2 2327.9 2342.6 2357.1" y="1391.8" font-size="25.08" fill="#ccccdb" stroke="#ccccdb" stroke-width="0.45">liangjingyang</text>
<text x="2700.6" y="1328.6" font-size="13.27" fill="#ccccdb" stroke="#ccccdb" stroke-width="0.3">6</text>
<text x="2644.1 2657.4 2670.4 2685.2 2699.8 2705.4 2711.1 2725 2736.8 2751.5" y="1391.8" font-size="25.08" fill="#ccccdb" stroke="#ccccdb" stroke-width="0.45">chaojieyan</text>
<text x="3108.6" y="1333.6" font-size="13.27" fill="#ccccdb" stroke="#ccccdb" stroke-width="0.3">3</text>
<text x="3028.6 3041.5 3054.4 3069.2 3083.6 3098.3 3112.8 3118.6 3133 3147.7 3162.2 3168 3182.4" y="1391.8" font-size="25.08" fill="#ccccdb" stroke="#ccccdb" stroke-width="0.45">zhangdingding</text>
<text x="3517.5" y="1336.6" font-size="13.27" fill="#ccccdb" stroke="#ccccdb" stroke-width="0.3">1</text>
<text x="3474.9 3489.3 3503.6 3512.8 3518.6 3524.4 3530.2 3544.3 3551.9" y="1391.8" font-size="25.08" fill="#ccccdb" stroke="#ccccdb" stroke-width="0.45">gerilleto</text>
<text x="3925.5" y="1336.6" font-size="13.27" fill="#ccccdb" stroke="#ccccdb" stroke-width="0.3">1</text>
<text x="3844.6 3865.6 3880 3889.1 3895.2 3908.7 3924.2 3934.4 3947.3 3961.5 3975.8 3982.4 3997.2" y="1391.8" font-size="25.08" fill="#ccccdb" stroke="#ccccdb" stroke-width="0.45">merico-zhutao</text>
<text x="96.4 117.7 132.3 141.2 156 170.5 183.8 197.7 212.4 226.9 233 237.5 251.4 260 274.6 289.4 303.8 318.2 331.2 337.7 350.8 364.6 379.2 393.7 408.3" y="1440.8" font-size="25.08" fill="#ccccdb" stroke="#ccccdb" stroke-width="0.45">merged_pull_request_count</text>
<text x="71.2 90.8 100.1 109.1 133.8 153.7 177.9 187.4 207.7 230.7 247.4 255.3 275.8 287.5 306.1 315.6 333.5 353.7 373.6 393.5 401.7 421.3 439.7" y="1526.6" font-size="33.44" fill="#ccccdb" stroke="#ccccdb" stroke-width="1">2. How PRs are handled?</text>
<text x="44.9 62.1 67.7 83.9 86.6 105 122.9 132.5 139.9 156.2 164.9 182.8 190.9 200.5 222.3 239.4 257.9 269.8 294.9 312 322.6 340 347.3 364.7 381 388.9 408.2 425.3 432.7 439.2 446.3 465.7 482.8 500.3 517.2 534.2 549.6 559.2 573.8 582.3 600.1 608.2 618 638.2 645.6 652.1 660 681.5 689 706.2 721.4 738.5 754.7 763.7 781.1 790.8 800 825.4 842.6 853.2 870.5 879.3 888" y="1605.3" font-size="29.26" fill="#ccccdb" stroke="#ccccdb" stroke-width="1">2.1 Ratio of Non-merging Pull Requests of All Closed or Merg...</text>
<text x="1056.9 1074.1 1083.2 1099.5 1107.3 1126.6 1143.7 1151 1157.6 1164.6 1184.1 1201.2 1218.6 1235.6 1252.6 1268 1276.2 1284.5 1304 1312.3 1330.2 1339.9 1357.1 1371.7 1379.2 1400.6 1408.1 1423.5 1433.4 1444.7 1452.3 1469.7 1486.9 1496.6 1504 1521.2 1537.4 1546.6 1554.8 1572.4 1590.4 1606.5 1622.8 1631.8 1657.3 1674.5 1691.8 1701.5 1719.8" y="1605.3" font-size="29.26" fill="#ccccdb" stroke="#ccccdb" stroke-width="1">2.2 Pull Request Status Distribution [Each Month]</text>
<text x="1126.4" y="1901.3" font-size="25.08" fill="#ccccdb" stroke="#ccccdb" stroke-width="0.45">0</text>
<text x="1112.1 1126.9" y="1828.2" font-size="25.08" fill="#ccccdb" stroke="#ccccdb" stroke-width="0.45">25</text>
<text x="1111.8 1126.4" y="1755.1" font-size="25.08" fill="#ccccdb" stroke="#ccccdb" stroke-width="0.45">50</text>
<text x="1112.8 1126.9" y="1682" font-size="25.08" fill="#ccccdb" stroke="#ccccdb" stroke-width="0.45">75</text>
<text x="957.5 973.6 987.8 993.6 999.2 1005 1021.2 1035.5 1050 1064.1 1078.2 1090.9 1097.9 1104.9 1123 1137.3 1151.5 1165.8" y="1786.3" font-size="25.08" fill="#ccccdb" stroke="#ccccdb" stroke-width="0.45" transform="rotate(-90 1066.6 1777.3)">Pull Request Count</text>
<text x="1131.2 1146.2 1161.4 1169.6 1184.3" y="1931" font-size="25.08" fill="#ccccdb" stroke="#ccccdb" stroke-width="0.45">08/22</text>
<text x="1239.9 1254.9 1270.1 1278.3 1293" y="1931" font-size="25.08" fill="#ccccdb" stroke="#ccccdb" stroke-width="0.45">08/29</text>
<text x="1348.7 1363.8 1379 1387.4 1402.5" y="1931" font-size="25.08" fill="#ccccdb" stroke="#ccccdb" stroke-width="0.45">09/05</text>
<text x="1460.5 1475.5 1490.8 1497.7 1508.8" y="1931" font-size="25.08" fill="#ccccdb" stroke="#ccccdb" stroke-width="0.45">09/12</text>
<text x="1569.2 1584.2 1599.5 1606.4 1617.5" y="1931" font-size="25.08" fill="#ccccdb" stroke="#ccccdb" stroke-width="0.45">09/19</text>
<text x="1675.8 1690.8 1706 1714.2 1728.9" y="1931" font-size="25.08" fill="#ccccdb" stroke="#ccccdb" stroke-width="0.45">09/26</text>
<text x="1785.8 1797 1812.4 1820.8 1835.9" y="1931" font-size="25.08" fill="#ccccdb" stroke="#ccccdb" stroke-width="0.45">10/03</text>
<text x="1897.3 1908.5 1923.9 1930.8 1942" y="1931" font-size="25.08" fill="#ccccdb" stroke="#ccccdb" stroke-width="0.45">10/10</text>
<text x="2006.9 2018.1 2033.5 2040.4 2050.9" y="1931" font-size="25.08" fill="#ccccdb" stroke="#ccccdb" stroke-width="0.45">10/17</text>
<text x="2112.8 2124 2139.4 2147.6 2162.3" y="1931" font-size="25.08" fill="#ccccdb" stroke="#ccccdb" stroke-width="0.45">10/24</text>
<text x="2224.7 2235.9 2251.3 2259.6 2273.1" y="1931" font-size="25.08" fill="#ccccdb" stroke="#ccccdb" stroke-width="0.45">10/31</text>
<text x="2334 2343.8 2355.3 2363.7 2377.6" y="1931" font-size="25.08" fill="#ccccdb" stroke="#ccccdb" stroke-width="0.45">11/07</text>
<text x="2444.6 2454.4 2465.8 2472.8 2484.3" y="1931" font-size="25.08" fill="#ccccdb" stroke="#ccccdb" stroke-width="0.45">11/14</text>
<text x="2554.4 2564.1 2575.6 2583.8 2597.2" y="1931" font-size="25.08" fill="#ccccdb" stroke="#ccccdb" stroke-width="0.45">11/21</text>
<text x="2660.5 2670.2 2681.7 2689.9 2704.6" y="1931" font-size="25.08" fill="#ccccdb" stroke="#ccccdb" stroke-width="0.45">11/28</text>
<text x="2766.9 2777.9 2793 2801.4 2816.5" y="1931" font-size="25.08" fill="#ccccdb" stroke="#ccccdb" stroke-width="0.45">12/05</text>
<text x="2878.7 2889.7 2904.8 2911.7 2922.7" y="1931" font-size="25.08" fill="#ccccdb" stroke="#ccccdb" stroke-width="0.45">12/12</text>
<text x="2987.4 2998.4 3013.5 3020.4 3031.5" y="1931" font-size="25.08" fill="#ccccdb" stroke="#ccccdb" stroke-width="0.45">12/19</text>
<text x="3093.9 3104.9 3120 3128.2 3142.9" y="1931" font-size="25.08" fill="#ccccdb" stroke="#ccccdb" stroke-width="0.45">12/26</text>
<text x="3204 3217.6 3229.1 3237.5 3252.4" y="1931" font-size="25.08" fill="#ccccdb" stroke="#ccccdb" stroke-width="0.45">01/02</text>
<text x="3312.7 3326.3 3337.8 3346.2 3361.2" y="1931" font-size="25.08" fill="#ccccdb" stroke="#ccccdb" stroke-width="0.45">01/09</text>
<text x="3424.3 3438 3449.5 3456.4 3467.4" y="1931" font-size="25.08" fill="#ccccdb" stroke="#ccccdb" stroke-width="0.45">01/16</text>
<text x="3530.9 3544.6 3556.1 3564.2 3579" y="1931" font-size="25.08" fill="#ccccdb" stroke="#ccccdb" stroke-width="0.45">01/23</text>
<text x="3639.6 3653.3 3664.8 3673.1 3688" y="1931" font-size="25.08" fill="#ccccdb" stroke="#ccccdb" stroke-width="0.45">01/30</text>
<text x="3746.1 3761.1 3776.2 3784.6 3799.5" y="1931" font-size="25.08" fill="#ccccdb" stroke="#ccccdb" stroke-width="0.45">02/06</text>
<text x="3857.8 3872.8 3887.8 3894.8 3905.9" y="1931" font-size="25.08" fill="#ccccdb" stroke="#ccccdb" stroke-width="0.45">02/13</text>
<text x="3964.2 3979.1 3994.2 4002.4 4017.3" y="1931" font-size="25.08" fill="#ccccdb" stroke="#ccccdb" stroke-width="0.45">02/20</text>
<text x="1107.2 1122.4 1139.2 1146.2 1153 1172.6 1187.3 1201.6" y="1973.4" font-size="25.08" fill="#ccccdb" stroke="#ccccdb" stroke-width="0.45">PR: Open</text>
<text x="1232.3 1246.4 1261.1 1268 1283 1289 1296 1302.4 1313.9" y="1973.4" font-size="25.08" fill="#ccccdb" stroke="#ccccdb" stroke-width="0.45">Total: 15</text>
<text x="1391.1 1406.3 1423.1 1430.1 1437 1455.4 1461.6 1476.3 1489.1 1503.7 1517.6 1526.1 1545.5 1551.7 1559.6 1574.3 1588.9 1603.5 1610.4 1618.5 1639.9 1654.4 1663.4 1678.2 1684.2 1699" y="1973.4" font-size="25.08" fill="#ccccdb" stroke="#ccccdb" stroke-width="0.45">PR: Closed without merging</text>
<text x="1730.2 1744.3 1759 1765.9 1780.9 1786.9 1793.9 1802 1817.4" y="1973.4" font-size="25.08" fill="#ccccdb" stroke="#ccccdb" stroke-width="0.45">Total: 48</text>
<text x="1894.3 1909.5 1926.3 1933.3 1941 1962.7 1977.3 1986.2 2000.9 2015.5" y="1973.4" font-size="25.08" fill="#ccccdb" stroke="#ccccdb" stroke-width="0.45">PR: Merged</text>
<text x="2046.1 2060.2 2074.9 2081.8 2096.8 2102.8 2109.8 2117.5 2132.5 2147.6" y="1973.4" font-size="25.08" fill="#ccccdb" stroke="#ccccdb" stroke-width="0.45">Total: 292</text>
<text x="44.9 62.1 70.7 87 95.6 117.4 134.5 159.9 177.1 194.3 204 213 230.8 238.9 247.8 267.1 284.2 291.6 298.1 305.2 324.6 341.7 359.1 376.1 393.1 408.6 418.1 432.7 440.4 461.9 469.3 486.6 501.7 518.9 535.1 544.8 567.5 575.1 584.7 601.9 619.1 636.4 644.5 654.1 679.5 696.7 707.3 724.7 732 749.4 765.7 775.1 784.2 803.4 820.3 827.5 844.7 860.8 869.6 878.4" y="2061.3" font-size="29.26" fill="#ccccdb" stroke="#ccccdb" stroke-width="1">2.3 Number of Pull Requests Closed without Merging [Selec...</text>
<text x="1056.9 1074.1 1083.9 1100.1 1107.9 1126.2 1144.1 1153.8 1161.2 1177.4 1186.1 1204 1212.1 1221.7 1243.5 1260.7 1279.1 1291 1316.1 1333.2 1343.8 1361.2 1368.6 1385.9 1402.2 1410.1 1427.8 1447.9 1462.6 1471 1488.9 1497 1506.8 1527 1534.4 1540.9 1548.8 1570.3 1577.7 1595 1610.1 1627.2 1643.5 1652.4 1669.9 1679.6 1688.8 1714.2 1731.4 1741.9 1759.2 1776.3 1792.6 1800.4 1818.2 1838.3 1852.9 1861.9 1870 1887.6 1905.6 1921.7 1938 1947 1972.6 1989.7 2007.1 2016.7 2035" y="2061.3" font-size="29.26" fill="#ccccdb" stroke="#ccccdb" stroke-width="1">2.4 Ratio of Non-merging PRs of All Closed or Merged PRs [Each Month]</text>
<text x="1126.2 1141.4" y="2357.7" font-size="25.08" fill="#ccccdb" stroke="#ccccdb" stroke-width="0.45">0%</text>
<text x="1115 1126.2 1141.4" y="2251" font-size="25.08" fill="#ccccdb" stroke="#ccccdb" stroke-width="0.45">10%</text>
<text x="1111.3 1126.2 1141.4" y="2144.2" font-size="25.08" fill="#ccccdb" stroke="#ccccdb" stroke-width="0.45">20%</text>
<text x="1035.8 1051.1 1065.9 1073.7 1079.6" y="2241.5" font-size="25.08" fill="#ccccdb" stroke="#ccccdb" stroke-width="0.45" transform="rotate(-90 1065.8 2232.5)">Ratio</text>
<text x="1151 1166 1181.2 1189.4 1204.1" y="2386.8" font-size="25.08" fill="#ccccdb" stroke="#ccccdb" stroke-width="0.45">08/22</text>
<text x="1258.9 1273.9 1289.2 1297.4 1312.1" y="2386.8" font-size="25.08" fill="#ccccdb" stroke="#ccccdb" stroke-width="0.45">08/29</text>
<text x="1367 1382 1397.3 1405.7 1420.8" y="2386.8" font-size="25.08" fill="#ccccdb" stroke="#ccccdb" stroke-width="0.45">09/05</text>
<text x="1478 1493.1 1508.3 1515.2 1526.3" y="2386.8" font-size="25.08" fill="#ccccdb" stroke="#ccccdb" stroke-width="0.45">09/12</text>
<text x="1586 1601 1616.2 1623.2 1634.3" y="2386.8" font-size="25.08" fill="#ccccdb" stroke="#ccccdb" stroke-width="0.45">09/19</text>
<text x="1691.7 1706.8 1722 1730.2 1744.9" y="2386.8" font-size="25.08" fill="#ccccdb" stroke="#ccccdb" stroke-width="0.45">09/26</text>
<text x="1801 1812.2 1827.6 1836 1851.1" y="2386.8" font-size="25.08" fill="#ccccdb" stroke="#ccccdb" stroke-width="0.45">10/03</text>
<text x="1911.7 1923 1938.3 1945.3 1956.5" y="2386.8" font-size="25.08" fill="#ccccdb" stroke="#ccccdb" stroke-width="0.45">10/10</text>
<text x="2020.6 2031.8 2047.2 2054.1 2064.6" y="2386.8" font-size="25.08" fill="#ccccdb" stroke="#ccccdb" stroke-width="0.45">10/17</text>
<text x="2125.7 2136.9 2152.3 2160.5 2175.2" y="2386.8" font-size="25.08" fill="#ccccdb" stroke="#ccccdb" stroke-width="0.45">10/24</text>
<text x="2236.9 2248.1 2263.5 2271.8 2285.2" y="2386.8" font-size="25.08" fill="#ccccdb" stroke="#ccccdb" stroke-width="0.45">10/31</text>
<text x="2345.4 2355.2 2366.7 2375.1 2389" y="2386.8" font-size="25.08" fill="#ccccdb" stroke="#ccccdb" stroke-width="0.45">11/07</text>
<text x="2455.3 2465 2476.5 2483.4 2494.9" y="2386.8" font-size="25.08" fill="#ccccdb" stroke="#ccccdb" stroke-width="0.45">11/14</text>
<text x="2564.3 2574 2585.5 2593.7 2607.1" y="2386.8" font-size="25.08" fill="#ccccdb" stroke="#ccccdb" stroke-width="0.45">11/21</text>
<text x="2669.6 2679.4 2690.8 2699 2713.7" y="2386.8" font-size="25.08" fill="#ccccdb" stroke="#ccccdb" stroke-width="0.45">11/28</text>
<text x="2775.2 2786.3 2801.3 2809.8 2824.9" y="2386.8" font-size="25.08" fill="#ccccdb" stroke="#ccccdb" stroke-width="0.45">12/05</text>
<text x="2886.3 2897.3 2912.4 2919.3 2930.3" y="2386.8" font-size="25.08" fill="#ccccdb" stroke="#ccccdb" stroke-width="0.45">12/12</text>
<text x="2994.2 3005.2 3020.3 3027.2 3038.4" y="2386.8" font-size="25.08" fill="#ccccdb" stroke="#ccccdb" stroke-width="0.45">12/19</text>
<text x="3100 3111 3126.1 3134.3 3148.9" y="2386.8" font-size="25.08" fill="#ccccdb" stroke="#ccccdb" stroke-width="0.45">12/26</text>
<text x="3209.3 3222.9 3234.4 3242.8 3257.7" y="2386.8" font-size="25.08" fill="#ccccdb" stroke="#ccccdb" stroke-width="0.45">01/02</text>
<text x="3317.2 3330.9 3342.4 3350.8 3365.8" y="2386.8" font-size="25.08" fill="#ccccdb" stroke="#ccccdb" stroke-width="0.45">01/09</text>
<text x="3428.1 3441.8 3453.3 3460.2 3471.2" y="2386.8" font-size="25.08" fill="#ccccdb" stroke="#ccccdb" stroke-width="0.45">01/16</text>
<text x="3533.9 3547.6 3559.1 3567.3 3582" y="2386.8" font-size="25.08" fill="#ccccdb" stroke="#ccccdb" stroke-width="0.45">01/23</text>
<text x="3641.9 3655.5 3667 3675.4 3690.2" y="2386.8" font-size="25.08" fill="#ccccdb" stroke="#ccccdb" stroke-width="0.45">01/30</text>
<text x="3747.6 3762.5 3777.6 3786 3801" y="2386.8" font-size="25.08" fill="#ccccdb" stroke="#ccccdb" stroke-width="0.45">02/06</text>
<text x="3858.5 3873.5 3888.6 3895.5 3906.7" y="2386.8" font-size="25.08" fill="#ccccdb" stroke="#ccccdb" stroke-width="0.45">02/13</text>
<text x="3964.2 3979.1 3994.2 4002.4 4017.2" y="2386.8" font-size="25.08" fill="#ccccdb" stroke="#ccccdb" stroke-width="0.45">02/20</text>
<text x="1108.5 1116.3 1131.5 1139.6 1145.7" y="2429.2" font-size="25.08" fill="#ccccdb" stroke="#ccccdb" stroke-width="0.45">ratio</text>
<text x="1177 1198.6 1211.9 1227 1241.3 1248.3 1254.8 1266.1 1280.6 1288.7 1304.3" y="2429.2" font-size="25.08" fill="#ccccdb" stroke="#ccccdb" stroke-width="0.45">Mean: 12.4%</text>
<text x="44.9 62.1 71.2 87.4 96.3 121.7 137.4 155.1 171.4 179.9 198.6 205.9 231 247.2 255.8 265.2 281.5 290.5 315.9 333 343.6 360.8 377.1 385.5 403.4 411.5 420.4 439.7 456.8 464.2 470.7 477.7 497.2 514.3 531.7 548.7 565.7 581.1 590.6 605.3 613.7 621 637.3 645.1 664.9 682.7 698.7 713.4 722.3 731.4 750.6 767.5 774.7 791.9 808.3 817.5 834.6 850.9 859.7 868.4 877.2" y="2517.3" font-size="29.26" fill="#ccccdb" stroke="#ccccdb" stroke-width="1">2.5 Mean Time to Merge of Pull Requests in Days [Selected ...</text>
<text x="1056.9 1074.1 1082.5 1098.8 1108.2 1133.6 1149.3 1167 1183.3 1191.8 1210.5 1217.8 1242.9 1259.1 1267.7 1277.1 1293.4 1302.4 1327.8 1344.9 1355.5 1372.7 1389 1397.4 1415.3 1423.4 1432.3 1451.6 1468.7 1476.1 1482.6 1489.6 1509.1 1526.2 1543.6 1560.6 1577.6 1593 1602.5 1617.2 1625.6 1632.9 1649.2 1657 1676.8 1694.6 1710.6 1725.3 1734.2 1742.4 1760 1778 1794.1 1810.4 1819.4 1844.9 1862.1 1879.4 1889.1 1907.4" y="2517.3" font-size="29.26" fill="#ccccdb" stroke="#ccccdb" stroke-width="1">2.6 Mean Time to Merge of Pull Requests in Days [Each Month]</text>
<text x="1076.9" y="2793.2" font-size="25.08" fill="#ccccdb" stroke="#ccccdb" stroke-width="0.45">0</text>
<text x="1056 1070.2 1077.4" y="2732.5" font-size="25.08" fill="#ccccdb" stroke="#ccccdb" stroke-width="0.45">2.5</text>
<text x="1077.4" y="2671.8" font-size="25.08" fill="#ccccdb" stroke="#ccccdb" stroke-width="0.45">5</text>
<text x="1059.5 1070.2 1077.4" y="2611.1" font-size="25.08" fill="#ccccdb" stroke="#ccccdb" stroke-width="0.45">7.5</text>
<text x="1202.2 1209.6 1213.2 1220.4" y="2586.6" font-size="13.27" fill="#ccccdb" stroke="#ccccdb" stroke-width="0.3">8.01</text>
<text x="1141.1 1157.9 1172.3 1186.8 1201 1213.7 1220.7 1228.5 1243.3 1258.3 1273" y="2835.2" font-size="25.08" fill="#ccccdb" stroke="#ccccdb" stroke-width="0.45">August 2023</text>
<text x="1652.1 1659.3 1662.9 1670.4" y="2626.6" font-size="13.27" fill="#ccccdb" stroke="#ccccdb" stroke-width="0.3">6.37</text>
<text x="1569 1585.1 1599.5 1614 1621.4 1635.4 1656.8 1671.1 1685.5 1693.8 1701.2 1716.1 1731 1745.8" y="2835.2" font-size="25.08" fill="#ccccdb" stroke="#ccccdb" stroke-width="0.45">September 2023</text>
<text x="2102.9 2110.2 2113.7 2121.7" y="2667.6" font-size="13.27" fill="#ccccdb" stroke="#ccccdb" stroke-width="0.3">4.68</text>
<text x="2036.4 2055.7 2069.2 2076.9 2091.4 2105.8 2120.1 2128.4 2135.9 2150.7 2165.7 2180.4" y="2835.2" font-size="25.08" fill="#ccccdb" stroke="#ccccdb" stroke-width="0.45">October 2023</text>
<text x="2555.6 2562.6 2564.7 2570.6" y="2656.6" font-size="13.27" fill="#ccccdb" stroke="#ccccdb" stroke-width="0.3">5.13</text>
<text x="2474.6 2492.9 2507.1 2519.7 2533.7 2555.1 2569.4 2583.7 2592.1 2599.5 2614.4 2629.3 2644.1" y="2835.2" font-size="25.08" fill="#ccccdb" stroke="#ccccdb" stroke-width="0.45">November 2023</text>
<text x="3004.8 3012.1 3016 3023.8" y="2678.6" font-size="13.27" fill="#ccccdb" stroke="#ccccdb" stroke-width="0.3">4.23</text>
<text x="2925.2 2943 2957.4 2970.7 2984.7 3006.1 3020.4 3034.7 3043.1 3050.5 3065.4 3080.3 3095.1" y="2835.2" font-size="25.08" fill="#ccccdb" stroke="#ccccdb" stroke-width="0.45">December 2023</text>
<text x="3455.4 3462.9 3466.6 3474.6" y="2732.6" font-size="13.27" fill="#ccccdb" stroke="#ccccdb" stroke-width="0.3">2.00</text>
<text x="3390.7 3402.4 3417.1 3431.3 3444.2 3459.2 3468.7 3481.3 3488.9 3503.8 3518.7 3533.4" y="2835.2" font-size="25.08" fill="#ccccdb" stroke="#ccccdb" stroke-width="0.45">January 2024</text>
<text x="3907.3 3912.9 3916.5 3924.4" y="2755.6" font-size="13.27" fill="#ccccdb" stroke="#ccccdb" stroke-width="0.3">1.06</text>
<text x="3834.8 3848.9 3863.2 3877.9 3886.7 3899.5 3914.6 3924.1 3936.6 3944.2 3959.1 3974 3988.8" y="2835.2" font-size="25.08" fill="#ccccdb" stroke="#ccccdb" stroke-width="0.45">February 2024</text>
<text x="1108.9 1124.8 1130.8 1152.1 1166.1 1173.6 1181.6 1195.5 1203.5 1225.1 1239.7 1248.6 1263.4" y="2885" font-size="25.08" fill="#ccccdb" stroke="#ccccdb" stroke-width="0.45">Time to Merge</text>
<text x="44.9 62.1 70 86.3 94.9 120.2 135.9 153.6 169.9 178.4 197.1 204.4 229.5 245.7 254.3 263.7 280 288 309.5 316.9 334.2 349.3 365.6 374 391.8 400 408.8 428.1 445.2 452.6 459.1 466.2 485.6 502.7 520.2 537.1 554.1 569.6 579.1 593.7 602.2 609.5 625.7 633.5 653.4 671.1 687.2 701.8 710.8 719.9 739.1 756 763.2 780.3 796.7 806 823.1 839.3 848.1 865.7 874.5 883.3" y="2973.3" font-size="29.26" fill="#ccccdb" stroke="#ccccdb" stroke-width="1">2.7 Mean Time to Close of Pull Requests in Days [Selected T...</text>
<text x="1056.9 1074.1 1082.7 1099 1108.3 1133.7 1149.3 1167 1183.3 1191.9 1210.6 1217.9 1242.9 1259.2 1267.7 1277.2 1293.4 1301.4 1322.9 1330.3 1347.6 1362.7 1379 1387.4 1405.3 1413.4 1422.3 1441.6 1458.7 1466 1472.5 1479.6 1499.1 1516.2 1533.6 1550.6 1567.6 1583 1592.5 1607.2 1615.6 1622.9 1639.2 1647 1666.8 1684.6 1700.6 1715.3 1724.2 1732.4 1749.9 1767.9 1784.1 1800.3 1809.4 1834.9 1852.1 1869.4 1879.1 1897.3" y="2973.3" font-size="29.26" fill="#ccccdb" stroke="#ccccdb" stroke-width="1">2.8 Mean Time to Close of Pull Requests in Days [Each Month]</text>
<text x="1068.9" y="3249.1" font-size="25.08" fill="#ccccdb" stroke="#ccccdb" stroke-width="0.45">0</text>
<text x="1069.4" y="3166.2" font-size="25.08" fill="#ccccdb" stroke="#ccccdb" stroke-width="0.45">5</text>
<text x="1057.7 1068.9" y="3083.3" font-size="25.08" fill="#ccccdb" stroke="#ccccdb" stroke-width="0.45">10</text>
<text x="1193.1 1200.6 1204.4 1212.3" y="3187.6" font-size="13.27" fill="#ccccdb" stroke="#ccccdb" stroke-width="0.3">2.99</text>
<text x="1133.7 1150.5 1164.9 1179.4 1193.7 1206.4 1213.3 1221.2 1236 1250.9 1265.7" y="3291.1" font-size="25.08" fill="#ccccdb" stroke="#ccccdb" stroke-width="0.45">August 2023</text>
<text x="1645.6 1652.7 1656.6 1664" y="3149.6" font-size="13.27" fill="#ccccdb" stroke="#ccccdb" stroke-width="0.3">5.27</text>
<text x="1562.7 1578.8 1593.1 1607.6 1615.1 1629.1 1650.4 1664.8 1679.1 1687.5 1694.9 1709.7 1724.7 1739.5" y="3291.1" font-size="25.08" fill="#ccccdb" stroke="#ccccdb" stroke-width="0.45">September 2023</text>
<text x="2097.3 2104.3 2108.2 2116.1" y="3138.6" font-size="13.27" fill="#ccccdb" stroke="#ccccdb" stroke-width="0.3">5.90</text>
<text x="2031 2050.4 2063.9 2071.5 2086.1 2100.4 2114.7 2123.1 2130.5 2145.4 2160.3 2175.1" y="3291.1" font-size="25.08" fill="#ccccdb" stroke="#ccccdb" stroke-width="0.45">October 2023</text>
<text x="2549.2 2556.7 2560.3 2568.1" y="3197.6" font-size="13.27" fill="#ccccdb" stroke="#ccccdb" stroke-width="0.3">2.36</text>
<text x="2470.3 2488.6 2502.8 2515.4 2529.4 2550.7 2565.1 2579.4 2587.7 2595.2 2610 2625 2639.7" y="3291.1" font-size="25.08" fill="#ccccdb" stroke="#ccccdb" stroke-width="0.45">November 2023</text>
<text x="3003.2 3008.4 3014 3017.8" y="3039.6" font-size="13.27" fill="#ccccdb" stroke="#ccccdb" stroke-width="0.3">11.9</text>
<text x="2921.8 2939.7 2954 2967.4 2981.4 3002.7 3017.1 3031.4 3039.7 3047.2 3062 3077 3091.7" y="3291.1" font-size="25.08" fill="#ccccdb" stroke="#ccccdb" stroke-width="0.45">December 2023</text>
<text x="3454.2 3461.7 3465.3 3473.2" y="3193.6" font-size="13.27" fill="#ccccdb" stroke="#ccccdb" stroke-width="0.3">2.63</text>
<text x="3389.3 3401 3415.8 3430 3442.9 3457.9 3467.4 3479.9 3487.6 3502.4 3517.3 3532.1" y="3291.1" font-size="25.08" fill="#ccccdb" stroke="#ccccdb" stroke-width="0.45">January 2024</text>
<text x="3834.4 3848.5 3862.8 3877.5 3886.3 3899.2 3914.2 3923.7 3936.3 3943.9 3958.7 3973.7 3988.4" y="3291.1" font-size="25.08" fill="#ccccdb" stroke="#ccccdb" stroke-width="0.45">February 2024</text>
<text x="1108.9 1124.8 1130.8 1152.1 1166.1 1173.6 1181.6 1195.5 1202.7 1221 1227.2 1241.9 1254.8" y="3341" font-size="25.08" fill="#ccccdb" stroke="#ccccdb" stroke-width="0.45">Time to Close</text>
<text x="44.6 62.9 79.9 87 101.6 110.4 126.1 143.7 158.7 175.9 193.1 208.9 226.7 237 253.3 262.4 269.6 284.2 293.1 309.3 319.3 334.8 352.4 361.4 378.4 394.7 404.1 420 437.6 452.5 469.4 485.7 494.9 511.9 528.1 537 546.3 563.3 570.4 585 593.8 609.5 627.2 635.1 651.4 660.9 676.2 692.1 709 725.6 749 766.4 774.5 782.9 808 825.5 842.5 850.6 860.1 869.3 885.6 893 910.8 928.2 944.5 953.5 978.5 995.8 1005.8 1022.1 1030.6 1055.4 1072.2 1081.9 1092.9 1100.3 1116.3 1130 1146.3 1153.2 1172.3 1179.3 1194.8 1212.4 1227.3 1243.6 1252.8 1262.1 1279.1 1286.2 1293.4 1310.6 1331.7 1341.3 1350.6 1367.5 1383.7 1392.6 1409.8 1426.7 1434 1451.1 1467.6" y="3479.8" font-size="29.26" fill="#ccccdb" stroke="#ccccdb" stroke-width="0.45">This dashboard is created based on this <tspan fill="#799ef8" stroke="#799ef8">data schema</tspan>. Want to add more metrics? Please follow the <tspan fill="#799ef8" stroke="#799ef8">guide</tspan>.</text>
<rect x="71.2" y="534.9" width="6.46" height="4.9" fill="#111217"/>
<rect x="81.62" y="534.9" width="4.88" height="4.9" fill="#111217"/>
<rect x="45.55" y="614.01" width="5.73" height="4.59" fill="#191b1f"/>
<rect x="54.87" y="614.01" width="4.12" height="4.59" fill="#191b1f"/>
<rect x="63.81" y="614.01" width="5.73" height="4.59" fill="#191b1f"/>
<rect x="73.12" y="614.01" width="5.5" height="4.59" fill="#191b1f"/>
<rect x="1057.55" y="614.01" width="5.73" height="4.59" fill="#191b1f"/>
<rect x="1066.87" y="614.01" width="4.12" height="4.59" fill="#191b1f"/>
<rect x="45.55" y="1070.01" width="5.73" height="4.59" fill="#191b1f"/>
<rect x="54.87" y="1070.01" width="4.12" height="4.59" fill="#191b1f"/>
<rect x="101.9" y="1193.63" width="5" height="3.72" fill="#191b1f"/>
<rect x="109.56" y="1193.63" width="4.31" height="3.72" fill="#191b1f"/>
<rect x="68.78" y="1602.01" width="5.73" height="4.59" fill="#191b1f"/>
<rect x="78.1" y="1602.01" width="5.5" height="4.59" fill="#191b1f"/>
<rect x="1498.81" y="1928.3" width="5" height="3.72" fill="#191b1f"/>
<rect x="1506.47" y="1928.3" width="3.02" height="3.72" fill="#191b1f"/>
<rect x="1607.52" y="1928.3" width="5" height="3.72" fill="#191b1f"/>
<rect x="1615.18" y="1928.3" width="3.74" height="3.72" fill="#191b1f"/>
<rect x="1786.85" y="1928.3" width="5" height="3.72" fill="#191b1f"/>
<rect x="1794.51" y="1928.3" width="4.31" height="3.72" fill="#191b1f"/>
<rect x="1898.35" y="1928.3" width="5" height="3.72" fill="#191b1f"/>
<rect x="1906.02" y="1928.3" width="4.31" height="3.72" fill="#191b1f"/>
<rect x="1931.9" y="1928.3" width="5" height="3.72" fill="#191b1f"/>
<rect x="1939.56" y="1928.3" width="4.31" height="3.72" fill="#191b1f"/>
<rect x="2007.96" y="1928.3" width="5" height="3.72" fill="#191b1f"/>
<rect x="2015.62" y="1928.3" width="4.31" height="3.72" fill="#191b1f"/>
<rect x="2041.51" y="1928.3" width="5" height="3.72" fill="#191b1f"/>
<rect x="2049.17" y="1928.3" width="4.8" height="3.72" fill="#191b1f"/>
<rect x="2113.84" y="1928.3" width="5" height="3.72" fill="#191b1f"/>
<rect x="2121.5" y="1928.3" width="4.31" height="3.72" fill="#191b1f"/>
<rect x="2225.77" y="1928.3" width="5" height="3.72" fill="#191b1f"/>
<rect x="2233.43" y="1928.3" width="4.31" height="3.72" fill="#191b1f"/>
<rect x="2274.14" y="1928.3" width="5" height="3.72" fill="#191b1f"/>
<rect x="2281.81" y="1928.3" width="4.8" height="3.72" fill="#191b1f"/>
<rect x="2335.11" y="1928.3" width="5" height="3.72" fill="#191b1f"/>
<rect x="2342.78" y="1928.3" width="4.8" height="3.72" fill="#191b1f"/>
<rect x="2344.88" y="1928.3" width="5" height="3.72" fill="#191b1f"/>
<rect x="2352.54" y="1928.3" width="2.19" height="3.72" fill="#191b1f"/>
<rect x="2445.7" y="1928.3" width="5" height="3.72" fill="#191b1f"/>
<rect x="2453.37" y="1928.3" width="4.8" height="3.72" fill="#191b1f"/>
<rect x="2455.47" y="1928.3" width="5" height="3.72" fill="#191b1f"/>
<rect x="2463.13" y="1928.3" width="2.19" height="3.72" fill="#191b1f"/>
<rect x="2473.87" y="1928.3" width="5" height="3.72" fill="#191b1f"/>
<rect x="2481.54" y="1928.3" width="4.8" height="3.72" fill="#191b1f"/>
<rect x="2555.47" y="1928.3" width="5" height="3.72" fill="#191b1f"/>
<rect x="2563.13" y="1928.3" width="4.8" height="3.72" fill="#191b1f"/>
<rect x="2565.23" y="1928.3" width="5" height="3.72" fill="#191b1f"/>
<rect x="2572.9" y="1928.3" width="2.19" height="3.72" fill="#191b1f"/>
<rect x="2598.28" y="1928.3" width="5" height="3.72" fill="#191b1f"/>
<rect x="2605.94" y="1928.3" width="4.8" height="3.72" fill="#191b1f"/>
<rect x="2661.56" y="1928.3" width="5" height="3.72" fill="#191b1f"/>
<rect x="2669.23" y="1928.3" width="4.8" height="3.72" fill="#191b1f"/>
<rect x="2671.33" y="1928.3" width="5" height="3.72" fill="#191b1f"/>
<rect x="2678.99" y="1928.3" width="2.19" height="3.72" fill="#191b1f"/>
<rect x="2767.97" y="1928.3" width="5" height="3.72" fill="#191b1f"/>
<rect x="2775.64" y="1928.3" width="3.02" height="3.72" fill="#191b1f"/>
<rect x="2879.75" y="1928.3" width="5" height="3.72" fill="#191b1f"/>
<rect x="2887.41" y="1928.3" width="3.02" height="3.72" fill="#191b1f"/>
<rect x="2912.8" y="1928.3" width="5" height="3.72" fill="#191b1f"/>
<rect x="2920.46" y="1928.3" width="3.02" height="3.72" fill="#191b1f"/>
<rect x="2988.46" y="1928.3" width="5" height="3.72" fill="#191b1f"/>
<rect x="2996.12" y="1928.3" width="3.02" height="3.72" fill="#191b1f"/>
<rect x="3021.51" y="1928.3" width="5" height="3.72" fill="#191b1f"/>
<rect x="3029.17" y="1928.3" width="3.74" height="3.72" fill="#191b1f"/>
<rect x="3094.99" y="1928.3" width="5" height="3.72" fill="#191b1f"/>
<rect x="3102.66" y="1928.3" width="3.02" height="3.72" fill="#191b1f"/>
<rect x="3218.72" y="1928.3" width="5" height="3.72" fill="#191b1f"/>
<rect x="3226.39" y="1928.3" width="2.21" height="3.72" fill="#191b1f"/>
<rect x="3327.43" y="1928.3" width="5" height="3.72" fill="#191b1f"/>
<rect x="3335.09" y="1928.3" width="2.21" height="3.72" fill="#191b1f"/>
<rect x="3439.09" y="1928.3" width="5" height="3.72" fill="#191b1f"/>
<rect x="3446.75" y="1928.3" width="2.21" height="3.72" fill="#191b1f"/>
<rect x="3457.5" y="1928.3" width="5" height="3.72" fill="#191b1f"/>
<rect x="3465.16" y="1928.3" width="4.32" height="3.72" fill="#191b1f"/>
<rect x="3545.66" y="1928.3" width="5" height="3.72" fill="#191b1f"/>
<rect x="3553.32" y="1928.3" width="2.21" height="3.72" fill="#191b1f"/>
<rect x="3654.38" y="1928.3" width="5" height="3.72" fill="#191b1f"/>
<rect x="3662.04" y="1928.3" width="2.21" height="3.72" fill="#191b1f"/>
<rect x="3895.86" y="1928.3" width="5" height="3.72" fill="#191b1f"/>
<rect x="3903.52" y="1928.3" width="3.54" height="3.72" fill="#191b1f"/>
<rect x="1303.5" y="1970.7" width="5" height="3.72" fill="#191b1f"/>
<rect x="1311.16" y="1970.7" width="3.72" height="3.72" fill="#191b1f"/>
<rect x="1116.04" y="2248.28" width="5" height="3.72" fill="#191b1f"/>
<rect x="1123.71" y="2248.28" width="4.31" height="3.72" fill="#191b1f"/>
<rect x="1516.32" y="2384.1" width="5" height="3.72" fill="#191b1f"/>
<rect x="1523.98" y="2384.1" width="3.02" height="3.72" fill="#191b1f"/>
<rect x="1624.27" y="2384.1" width="5" height="3.72" fill="#191b1f"/>
<rect x="1631.93" y="2384.1" width="3.74" height="3.72" fill="#191b1f"/>
<rect x="1802.07" y="2384.1" width="5" height="3.72" fill="#191b1f"/>
<rect x="1809.73" y="2384.1" width="4.31" height="3.72" fill="#191b1f"/>
<rect x="1912.81" y="2384.1" width="5" height="3.72" fill="#191b1f"/>
<rect x="1920.48" y="2384.1" width="4.31" height="3.72" fill="#191b1f"/>
<rect x="1946.36" y="2384.1" width="5" height="3.72" fill="#191b1f"/>
<rect x="1954.02" y="2384.1" width="4.31" height="3.72" fill="#191b1f"/>
<rect x="2021.66" y="2384.1" width="5" height="3.72" fill="#191b1f"/>
<rect x="2029.32" y="2384.1" width="4.31" height="3.72" fill="#191b1f"/>
<rect x="2055.2" y="2384.1" width="5" height="3.72" fill="#191b1f"/>
<rect x="2062.86" y="2384.1" width="4.8" height="3.72" fill="#191b1f"/>
<rect x="2126.77" y="2384.1" width="5" height="3.72" fill="#191b1f"/>
<rect x="2134.43" y="2384.1" width="4.31" height="3.72" fill="#191b1f"/>
<rect x="2237.94" y="2384.1" width="5" height="3.72" fill="#191b1f"/>
<rect x="2245.6" y="2384.1" width="4.31" height="3.72" fill="#191b1f"/>
<rect x="2286.31" y="2384.1" width="5" height="3.72" fill="#191b1f"/>
<rect x="2293.98" y="2384.1" width="4.8" height="3.72" fill="#191b1f"/>
<rect x="2346.52" y="2384.1" width="5" height="3.72" fill="#191b1f"/>
<rect x="2354.18" y="2384.1" width="4.8" height="3.72" fill="#191b1f"/>
<rect x="2356.29" y="2384.1" width="5" height="3.72" fill="#191b1f"/>
<rect x="2363.95" y="2384.1" width="2.19" height="3.72" fill="#191b1f"/>
<rect x="2456.35" y="2384.1" width="5" height="3.72" fill="#191b1f"/>
<rect x="2464.01" y="2384.1" width="4.8" height="3.72" fill="#191b1f"/>
<rect x="2466.11" y="2384.1" width="5" height="3.72" fill="#191b1f"/>
<rect x="2473.78" y="2384.1" width="2.19" height="3.72" fill="#191b1f"/>
<rect x="2484.52" y="2384.1" width="5" height="3.72" fill="#191b1f"/>
<rect x="2492.18" y="2384.1" width="4.8" height="3.72" fill="#191b1f"/>
<rect x="2565.35" y="2384.1" width="5" height="3.72" fill="#191b1f"/>
<rect x="2573.01" y="2384.1" width="4.8" height="3.72" fill="#191b1f"/>
<rect x="2575.12" y="2384.1" width="5" height="3.72" fill="#191b1f"/>
<rect x="2582.78" y="2384.1" width="2.19" height="3.72" fill="#191b1f"/>
<rect x="2608.16" y="2384.1" width="5" height="3.72" fill="#191b1f"/>
<rect x="2615.82" y="2384.1" width="4.8" height="3.72" fill="#191b1f"/>
<rect x="2670.68" y="2384.1" width="5" height="3.72" fill="#191b1f"/>
<rect x="2678.34" y="2384.1" width="4.8" height="3.72" fill="#191b1f"/>
<rect x="2680.45" y="2384.1" width="5" height="3.72" fill="#191b1f"/>
<rect x="2688.11" y="2384.1" width="2.19" height="3.72" fill="#191b1f"/>
<rect x="2776.33" y="2384.1" width="5" height="3.72" fill="#191b1f"/>
<rect x="2783.99" y="2384.1" width="3.02" height="3.72" fill="#191b1f"/>
<rect x="2887.34" y="2384.1" width="5" height="3.72" fill="#191b1f"/>
<rect x="2895.01" y="2384.1" width="3.02" height="3.72" fill="#191b1f"/>
<rect x="2920.39" y="2384.1" width="5" height="3.72" fill="#191b1f"/>
<rect x="2928.05" y="2384.1" width="3.02" height="3.72" fill="#191b1f"/>
<rect x="2995.29" y="2384.1" width="5" height="3.72" fill="#191b1f"/>
<rect x="3002.95" y="2384.1" width="3.02" height="3.72" fill="#191b1f"/>
<rect x="3028.33" y="2384.1" width="5" height="3.72" fill="#191b1f"/>
<rect x="3036" y="2384.1" width="3.74" height="3.72" fill="#191b1f"/>
<rect x="3101.06" y="2384.1" width="5" height="3.72" fill="#191b1f"/>
<rect x="3108.72" y="2384.1" width="3.02" height="3.72" fill="#191b1f"/>
<rect x="3224.03" y="2384.1" width="5" height="3.72" fill="#191b1f"/>
<rect x="3231.69" y="2384.1" width="2.21" height="3.72" fill="#191b1f"/>
<rect x="3331.97" y="2384.1" width="5" height="3.72" fill="#191b1f"/>
<rect x="3339.63" y="2384.1" width="2.21" height="3.72" fill="#191b1f"/>
<rect x="3442.87" y="2384.1" width="5" height="3.72" fill="#191b1f"/>
<rect x="3450.53" y="2384.1" width="2.21" height="3.72" fill="#191b1f"/>
<rect x="3461.27" y="2384.1" width="5" height="3.72" fill="#191b1f"/>
<rect x="3468.94" y="2384.1" width="4.32" height="3.72" fill="#191b1f"/>
<rect x="3548.67" y="2384.1" width="5" height="3.72" fill="#191b1f"/>
<rect x="3556.33" y="2384.1" width="2.21" height="3.72" fill="#191b1f"/>
<rect x="3656.63" y="2384.1" width="5" height="3.72" fill="#191b1f"/>
<rect x="3664.29" y="2384.1" width="2.21" height="3.72" fill="#191b1f"/>
<rect x="3896.58" y="2384.1" width="5" height="3.72" fill="#191b1f"/>
<rect x="3904.25" y="2384.1" width="3.54" height="3.72" fill="#191b1f"/>
<rect x="1255.84" y="2426.5" width="5" height="3.72" fill="#191b1f"/>
<rect x="1263.5" y="2426.5" width="3.3" height="3.72" fill="#191b1f"/>
<rect x="1058.74" y="3080.63" width="5" height="3.72" fill="#191b1f"/>
<rect x="1066.4" y="3080.63" width="4.31" height="3.72" fill="#191b1f"/>
</svg>
</div></body></html>
